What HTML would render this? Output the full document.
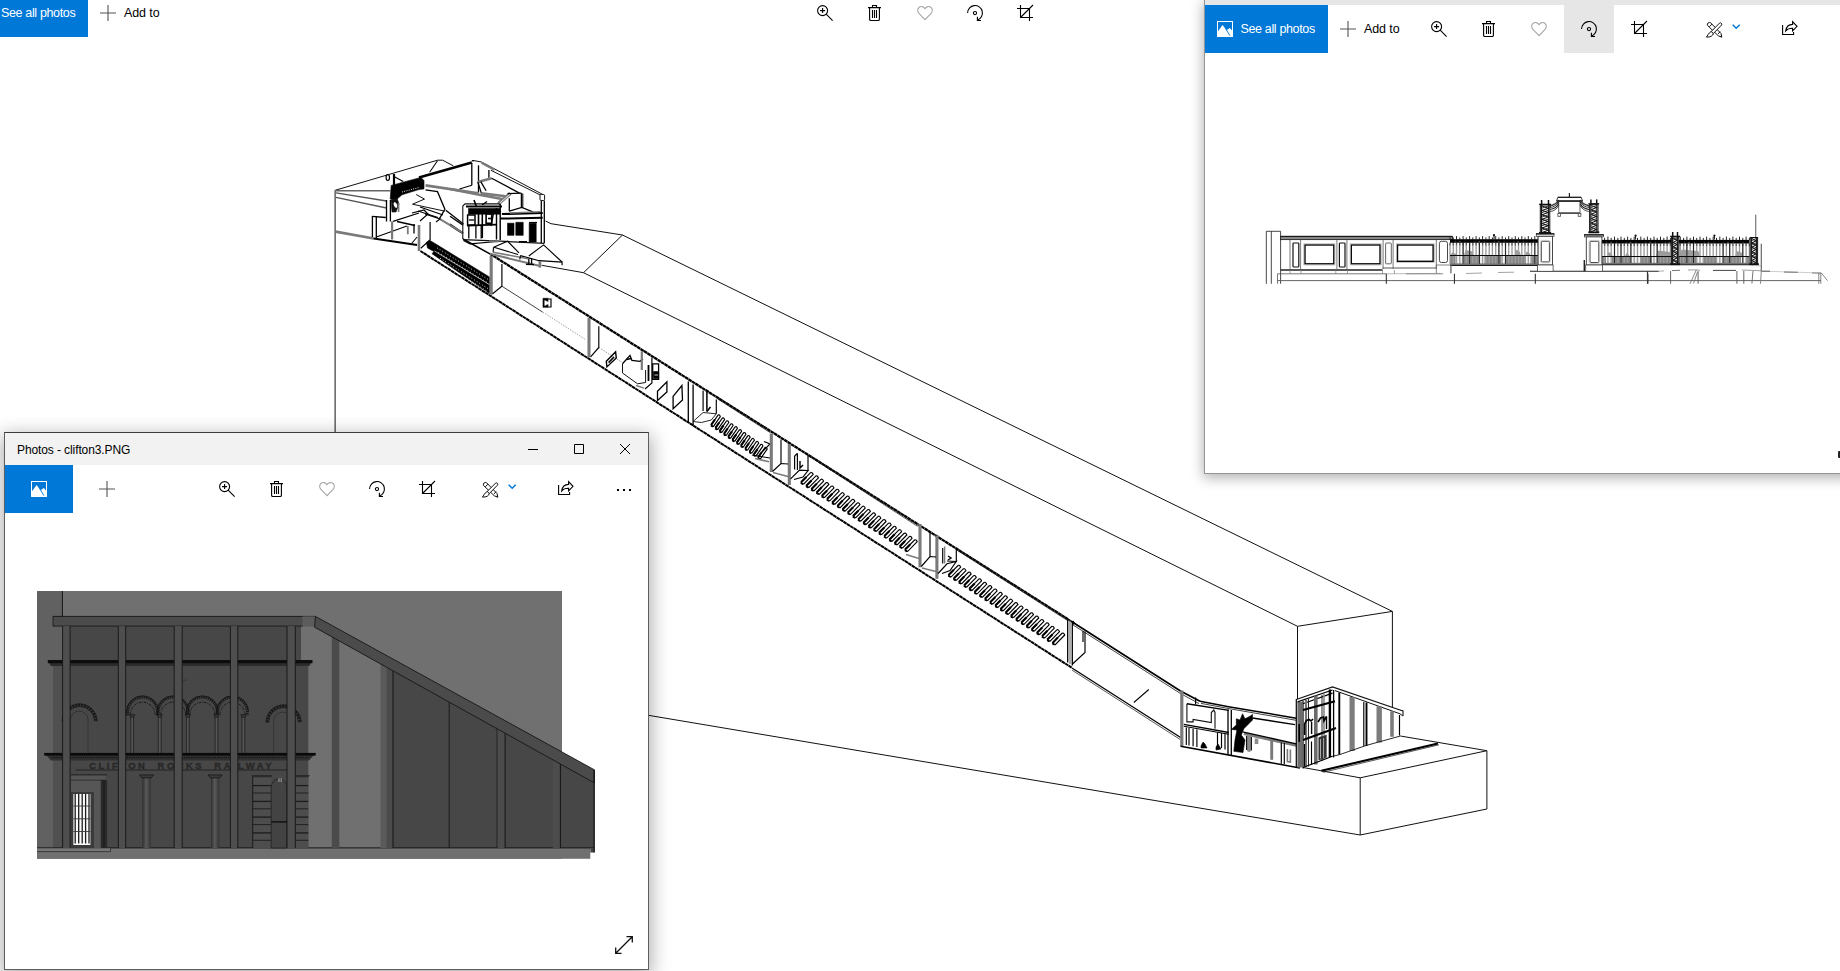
<!DOCTYPE html>
<html lang="en"><head><meta charset="utf-8"><title>Photos</title>
<style>
html,body{margin:0;padding:0;background:#fff;}
body{width:1840px;height:971px;overflow:hidden;position:relative;font-family:"Liberation Sans",sans-serif;color:#000;}
.ic{position:absolute;overflow:visible;display:block}
.abs{position:absolute}
.btn{position:absolute;background:#0078d7;color:#fff}
.t{position:absolute;white-space:nowrap;font-size:12.5px;line-height:16px;letter-spacing:-0.35px}
.win{position:absolute;background:#fff;overflow:hidden}
#w2{left:1204px;top:0px;width:700px;height:474px;border:1px solid #959595;border-top:none;box-sizing:border-box;
    box-shadow:0 3px 12px 1px rgba(0,0,0,.30);overflow:visible}
#w3{left:4px;top:432px;width:645px;height:538px;border:1px solid #5e5e5e;border-top-color:#3c3c3c;box-sizing:border-box;
    box-shadow:0 5px 18px 2px rgba(0,0,0,.33);overflow:visible}
.draw{position:absolute;left:0;top:0;display:block}
</style></head>
<body>
<div id="w1"><div class="btn" style="left:0;top:0;width:88px;height:37px"></div><div class="t" style="left:1px;top:5px;color:#fff">See all photos</div><svg class="ic" style="left:100px;top:5px" width="16" height="16" viewBox="0 0 16 16" ><path d="M0 8h16M8 0v16" fill="none" stroke="#555" stroke-width="1.1"/></svg><div class="t" style="left:124px;top:5px;letter-spacing:-0.1px">Add to</div><svg class="ic" style="left:817px;top:5px" width="16" height="16" viewBox="0 0 16 16" ><circle cx="5.6" cy="5.6" r="5" fill="none" stroke="#000" stroke-width="1.1"/><path d="M9.2 9.2L15.6 15.6M3.1 5.6h5M5.6 3.1v5" fill="none" stroke="#000" stroke-width="1.1"/></svg><svg class="ic" style="left:867px;top:5px" width="16" height="16" viewBox="0 0 16 16" ><path d="M1 2.6h13M5.5 2.5v-2h4v2M2.6 2.6v11.6q0 1.3 1.3 1.3h7.2q1.3 0 1.3-1.3v-11.6M5.5 5v8M7.5 5v8M9.5 5v8" fill="none" stroke="#000" stroke-width="1.1"/></svg><svg class="ic" style="left:917px;top:5px" width="16" height="16" viewBox="0 0 16 16" ><path d="M8 14.6L1.9 8.4C0.2 6.6 0.3 3.9 1.9 2.5C3.7 0.9 6.5 1.4 8 3.6C9.5 1.4 12.3 0.9 14.1 2.5C15.7 3.9 15.8 6.6 14.1 8.4Z" fill="none" stroke="#a6a6a6" stroke-width="1.1"/></svg><svg class="ic" style="left:967px;top:5px" width="16" height="16" viewBox="0 0 16 16" ><path d="M0.6 8A7.4 7.4 0 1 1 10.6 14.9" fill="none" stroke="#000" stroke-width="1.1"/><path d="M10.4 11.8v3.7h3.6" fill="none" stroke="#000" stroke-width="1.1" stroke-width="1.3"/><circle cx="8" cy="8.1" r="1.6" fill="none" stroke="#000" stroke-width="1.1"/></svg><svg class="ic" style="left:1017px;top:5px" width="16" height="16" viewBox="0 0 16 16" ><path d="M3.5 0v12.5h12.5M0 3.5h12.5v12.5M3.5 12.5L16 0" fill="none" stroke="#000" stroke-width="1.1"/></svg><svg class="draw" width="1840" height="971" viewBox="0 0 1840 971"><path d="M545.5 221.0 L551.0 223.7 L622.5 235.0" fill="none" stroke="#111" stroke-width="1.0" />
<path d="M622.5 235.0 L1392.4 611.4" fill="none" stroke="#111" stroke-width="1.0" />
<path d="M622.5 235.0 L583.5 272.7" fill="none" stroke="#111" stroke-width="1.0" />
<path d="M541.8 265.3 L583.5 272.7 L1297.5 626.3" fill="none" stroke="#111" stroke-width="1.0" />
<path d="M1297.5 626.3 L1392.4 611.4" fill="none" stroke="#111" stroke-width="1.0" />
<path d="M1297.5 626.3 L1297.5 699.0" fill="none" stroke="#111" stroke-width="1.0" />
<path d="M1392.4 611.4 L1392.4 707.0" fill="none" stroke="#111" stroke-width="1.0" />
<path d="M335.1 190.3 L335.1 436.0" fill="none" stroke="#111" stroke-width="1.0" />
<path d="M640.0 713.9 L1150.0 799.7 L1360.2 835.0 L1486.9 809.0 L1486.9 750.7 L1400.4 736.0" fill="none" stroke="#111" stroke-width="1.0" />
<path d="M1360.2 835.0 L1360.2 777.8" fill="none" stroke="#111" stroke-width="1.0" />
<path d="M1303.0 767.5 L1321.3 770.8 L1360.2 777.8 L1486.9 750.7" fill="none" stroke="#111" stroke-width="1.0" />
<path d="M1321.3 770.8 L1437.9 743.4" fill="none" stroke="#000" stroke-width="2.1" />
<path d="M1323.0 772.3 L1439.0 744.8" fill="none" stroke="#111" stroke-width="0.7" />
<path d="M450.0 225.5 L462.0 233.3" fill="none" stroke="#000" stroke-width="1.3" />
<path d="M450.0 216.3 L463.0 225.1" fill="none" stroke="#000" stroke-width="1.3" />
<path d="M450.0 224.1 L462.5 232.5" fill="none" stroke="#000" stroke-width="1.3" />
<path d="M463.0 239.0 L489.9 253.9" fill="none" stroke="#000" stroke-width="1.5" />
<path d="M489.9 253.7 L1068.0 619.2" fill="none" stroke="#000" stroke-width="2.3" stroke-dasharray="3.7 0.35"/>
<path d="M1068.0 619.2 L1180.5 690.9 L1200.0 701.3" fill="none" stroke="#000" stroke-width="1.7" />
<path d="M1073.0 624.9 L1180.5 693.5 L1199.0 703.6" fill="none" stroke="#111" stroke-width="0.8" />
<path d="M420.4 251.0 L1072.0 667.9" fill="none" stroke="#000" stroke-width="2.0" stroke-dasharray="3.7 0.35"/>
<path d="M1072.0 667.9 L1180.6 737.4" fill="none" stroke="#000" stroke-width="1.2" />
<path d="M1072.0 670.1 L1180.0 739.4" fill="none" stroke="#111" stroke-width="0.7" />
<path d="M335.1 190.3 L437.5 160.2 L442.6 160.2 L453.3 165.8" fill="none" stroke="#111" stroke-width="1.0" />
<path d="M437.5 160.7 L429.6 172.2" fill="none" stroke="#000" stroke-width="1.04" />
<path d="M335.0 190.8 L390.2 190.8" fill="none" stroke="#666" stroke-width="1.4" />
<path d="M336.0 192.8 L386.5 201.0" fill="none" stroke="#555" stroke-width="1.3" />
<path d="M336.0 197.3 L386.5 208.0" fill="none" stroke="#555" stroke-width="1.3" />
<path d="M419.0 177.4 L471.8 162.6" fill="none" stroke="#000" stroke-width="2.6" />
<path d="M391.2 185.4 L420.8 177.4 L424.0 180.6 L424.0 188.9 L419.0 189.5 L402.0 194.8 L395.5 200.4 L390.2 199.1 Z" fill="#000" stroke="#000" stroke-width="0.6" />
<path d="M402.0 192.0 L419.0 187.5" fill="none" stroke="#fff" stroke-width="0.9" stroke-dasharray="1 1.3"/>
<path d="M394.0 174.0 L394.0 186.0" fill="none" stroke="#000" stroke-width="2.2" />
<ellipse cx="387.8" cy="177.6" rx="1.7" ry="2.9" fill="#fff" stroke="#000" stroke-width="1.2"/>
<path d="M394.9 176.9 L403.2 181.5" fill="none" stroke="#000" stroke-width="1.1700000000000002" />
<path d="M386.5 200.0 L386.5 221.5" fill="none" stroke="#000" stroke-width="1.3" />
<path d="M390.4 200.0 L390.4 221.5" fill="none" stroke="#000" stroke-width="1.3" />
<path d="M391.0 200.0 L397.0 198.0 L399.0 204.0 L396.0 212.0 L392.0 212.0 Z" fill="#111" stroke="#111" stroke-width="0.6" />
<ellipse cx="395.5" cy="205" rx="1.6" ry="3" fill="#fff" transform="rotate(-25 395.5 205)"/>
<path d="M398.6 203.0 L398.6 212.0" fill="none" stroke="#7a7a7a" stroke-width="1.6" />
<path d="M372.2 216.3 L385.8 217.5" fill="none" stroke="#000" stroke-width="1.3" />
<path d="M372.4 216.0 L372.4 238.0" fill="none" stroke="#000" stroke-width="1.3" />
<path d="M376.3 216.5 L376.3 238.0" fill="none" stroke="#000" stroke-width="1.3" />
<path d="M393.0 221.4 L419.0 213.0" fill="none" stroke="#000" stroke-width="1.1700000000000002" />
<path d="M376.3 237.1 L407.0 226.0" fill="none" stroke="#000" stroke-width="1.04" />
<path d="M392.1 221.4 L392.1 239.5" fill="none" stroke="#7a7a7a" stroke-width="2.2" />
<path d="M407.8 226.0 L407.8 234.3" fill="none" stroke="#7a7a7a" stroke-width="1.8" />
<path d="M414.0 224.0 L414.0 233.5" fill="none" stroke="#000" stroke-width="1.3" />
<path d="M397.0 221.5 L415.0 225.5" fill="none" stroke="#000" stroke-width="1.6" />
<path d="M335.4 231.6 L373.8 238.5" fill="none" stroke="#7a7a7a" stroke-width="2.6" />
<path d="M373.6 238.5 L417.1 244.9" fill="none" stroke="#000" stroke-width="2.0" />
<path d="M419.0 225.0 L419.0 251.0" fill="none" stroke="#7a7a7a" stroke-width="2.6" />
<path d="M430.1 222.0 L430.1 239.8 L420.8 248.2" fill="none" stroke="#000" stroke-width="1.1700000000000002" />
<path d="M417.1 237.0 L411.6 243.5" fill="none" stroke="#000" stroke-width="1.04" />
<path d="M425.5 185.4 L478.3 193.3" fill="none" stroke="#7a7a7a" stroke-width="2.6" />
<path d="M425.5 189.9 L437.5 191.7 L444.9 209.3 L439.4 218.6" fill="none" stroke="#000" stroke-width="1.3" />
<path d="M416.2 194.5 L424.5 199.1 L412.5 204.2 L444.9 211.2" fill="none" stroke="#111" stroke-width="1.0" />
<path d="M420.0 207.0 L443.0 215.0" fill="none" stroke="#000" stroke-width="1.04" />
<path d="M418.0 211.0 L438.0 217.5" fill="none" stroke="#000" stroke-width="1.04" />
<path d="M412.0 213.0 L424.0 210.0 L428.0 214.0 L420.0 221.0" fill="none" stroke="#000" stroke-width="1.1700000000000002" />
<path d="M439.6 218.9 L463.3 233.2" fill="none" stroke="#7a7a7a" stroke-width="2.0" />
<path d="M445.8 210.2 L463.5 224.1" fill="none" stroke="#000" stroke-width="1.3" />
<path d="M425.0 214.0 L440.0 219.0 L436.0 222.0" fill="none" stroke="#000" stroke-width="1.1700000000000002" />
<path d="M471.8 163.0 L471.8 185.2" fill="none" stroke="#000" stroke-width="1.3" />
<path d="M478.5 165.3 L478.5 192.4" fill="none" stroke="#000" stroke-width="1.3" />
<path d="M459.5 189.0 L471.8 185.2" fill="none" stroke="#000" stroke-width="1.1700000000000002" />
<path d="M474.6 160.7 L481.5 162.0 L544.5 195.4" fill="none" stroke="#111" stroke-width="1.0" />
<path d="M471.8 160.7 L474.6 160.7" fill="none" stroke="#000" stroke-width="1.3" />
<path d="M481.5 162.8 L494.5 169.8" fill="none" stroke="#7a7a7a" stroke-width="2.2" />
<path d="M490.8 170.2 L541.8 195.8" fill="none" stroke="#111" stroke-width="1.0" />
<path d="M488.9 170.0 L488.9 177.8" fill="none" stroke="#000" stroke-width="1.3" />
<path d="M477.8 182.0 L491.7 178.3" fill="none" stroke="#7a7a7a" stroke-width="2.6" />
<path d="M491.7 178.3 L519.5 193.1" fill="none" stroke="#000" stroke-width="1.3" />
<path d="M477.8 182.0 L481.5 193.6" fill="none" stroke="#000" stroke-width="1.3" />
<path d="M480.8 181.6 L486.1 190.8" fill="none" stroke="#000" stroke-width="1.3" />
<path d="M481.5 193.4 L505.6 196.2" fill="none" stroke="#7a7a7a" stroke-width="2.6" />
<path d="M450.0 189.0 L480.6 195.0 L501.9 199.0" fill="none" stroke="#7a7a7a" stroke-width="2.4" />
<path d="M498.4 203.6 L510.4 193.4" fill="none" stroke="#7a7a7a" stroke-width="3.4" />
<path d="M499.5 203.2 L510.0 194.2" fill="none" stroke="#fff" stroke-width="0.8" />
<path d="M507.5 193.6 L521.4 193.1" fill="none" stroke="#000" stroke-width="1.3" />
<path d="M521.4 193.1 L521.4 207.5" fill="none" stroke="#000" stroke-width="1.3" />
<path d="M522.8 193.5 L522.8 207.8" fill="none" stroke="#000" stroke-width="1.04" />
<path d="M509.3 198.2 L509.3 211.2" fill="none" stroke="#000" stroke-width="1.3" />
<path d="M509.3 211.2 L521.8 207.5 L533.4 212.1" fill="none" stroke="#000" stroke-width="1.3" />
<path d="M541.3 200.5 L541.3 243.0" fill="none" stroke="#000" stroke-width="1.3" />
<path d="M544.3 200.5 L544.3 243.0" fill="none" stroke="#000" stroke-width="1.3" />
<rect x="540" y="194.5" width="4.6" height="6" rx="1.2" fill="#fff" stroke="#111" stroke-width="1"/>
<path d="M462.8 239.0 L462.8 206.0 L465.0 203.9 L500.0 203.9" fill="none" stroke="#111" stroke-width="1.1" />
<path d="M466.0 206.6 L502.0 206.6" fill="none" stroke="#000" stroke-width="2.0" />
<path d="M468.5 208.5 L500.0 208.5 L500.0 214.2 L468.5 214.2 Z" fill="#000" stroke="#000" stroke-width="0.6" />
<path d="M474.0 200.0 L476.5 207.0" fill="none" stroke="#000" stroke-width="1.6" />
<path d="M482.0 205.0 L487.0 201.5" fill="none" stroke="#000" stroke-width="1.4" />
<path d="M467.6 214.9 L475.0 214.9 L475.0 225.1 L467.6 225.1 Z" fill="none" stroke="#000" stroke-width="1.5" />
<path d="M469.0 220.0 L474.0 220.0" fill="none" stroke="#000" stroke-width="1.3" />
<path d="M478.5 212.0 L478.5 225.0" fill="none" stroke="#000" stroke-width="1.6" />
<path d="M482.3 212.0 L482.3 238.0" fill="none" stroke="#000" stroke-width="1.56" />
<path d="M486.1 214.0 L491.7 214.0 L491.7 223.2 L486.1 223.2 Z" fill="none" stroke="#000" stroke-width="1.6" />
<path d="M488.0 218.5 L491.0 218.5" fill="none" stroke="#000" stroke-width="1.56" />
<path d="M494.0 210.0 L491.0 226.0" fill="none" stroke="#000" stroke-width="1.4" />
<path d="M467.0 225.6 L496.0 224.6" fill="none" stroke="#000" stroke-width="1.6" />
<path d="M468.8 226.0 L468.8 238.5" fill="none" stroke="#000" stroke-width="1.3" />
<path d="M475.9 226.0 L475.9 238.5" fill="none" stroke="#000" stroke-width="1.3" />
<path d="M481.2 226.0 L481.2 238.5" fill="none" stroke="#000" stroke-width="1.3" />
<path d="M496.5 208.0 L496.5 239.5" fill="none" stroke="#000" stroke-width="1.4300000000000002" />
<path d="M500.2 204.0 L500.2 240.0" fill="none" stroke="#000" stroke-width="1.4300000000000002" />
<path d="M501.9 214.0 L542.7 213.0" fill="none" stroke="#000" stroke-width="2.2" />
<path d="M510.0 213.0 L541.0 211.6" fill="none" stroke="#7a7a7a" stroke-width="1.4" />
<path d="M500.5 218.6 L542.7 217.7" fill="none" stroke="#000" stroke-width="2.0" />
<path d="M507.5 223.2 L514.0 223.2 L514.0 235.3 L507.5 235.3 Z" fill="#000" stroke="#000" stroke-width="0.6" />
<path d="M515.8 222.3 L523.2 222.3 L523.2 235.3 L515.8 235.3 Z" fill="#000" stroke="#000" stroke-width="0.6" />
<path d="M529.2 223.2 L536.2 223.2 L536.2 242.0 L529.2 242.0 Z" fill="#000" stroke="#000" stroke-width="0.6" />
<path d="M529.0 222.5 L537.0 222.5" fill="none" stroke="#000" stroke-width="1.1700000000000002" />
<path d="M463.0 239.6 L500.0 241.2 L544.5 243.3" fill="none" stroke="#111" stroke-width="1.3" />
<path d="M463.5 240.5 L470.0 243.8 L497.0 241.5" fill="none" stroke="#000" stroke-width="1.1700000000000002" />
<path d="M489.0 241.2 L498.0 241.6" fill="none" stroke="#7a7a7a" stroke-width="1.8" />
<path d="M519.0 241.8 L527.0 241.6" fill="none" stroke="#000" stroke-width="1.4" />
<path d="M493.6 247.2 L507.5 241.2 L519.0 252.8" fill="none" stroke="#000" stroke-width="1.1700000000000002" />
<path d="M493.6 247.2 L493.1 252.3" fill="none" stroke="#000" stroke-width="1.1700000000000002" />
<path d="M494.0 247.3 L518.0 254.5" fill="none" stroke="#000" stroke-width="1.1700000000000002" />
<path d="M528.8 256.0 L543.6 244.9 L562.1 262.1 L562.1 265.3" fill="none" stroke="#000" stroke-width="1.1700000000000002" />
<path d="M520.4 255.6 L539.0 260.7 L562.1 262.1" fill="none" stroke="#000" stroke-width="1.1700000000000002" />
<path d="M489.9 253.7 L539.0 265.8" fill="none" stroke="#7a7a7a" stroke-width="2.0" />
<path d="M493.0 252.2 L528.0 258.8" fill="none" stroke="#7a7a7a" stroke-width="1.6" />
<path d="M520.5 255.5 L519.8 259.5" fill="none" stroke="#000" stroke-width="1.1700000000000002" />
<path d="M528.8 258.4 L528.8 263.9" fill="none" stroke="#000" stroke-width="1.3" />
<path d="M531.6 258.4 L531.6 263.9" fill="none" stroke="#000" stroke-width="1.3" />
<path d="M526.0 264.2 L534.0 264.6" fill="none" stroke="#000" stroke-width="1.4" />
<path d="M539.9 261.0 L539.9 267.6" fill="none" stroke="#7a7a7a" stroke-width="2.8" />
<path d="M426.4 242.4 L430.0 240.5 L435.0 243.5 L489.4 276.9 L489.4 293.6 L432.0 253.7 L434.0 251.5 L427.5 248.0 Z" fill="#000" stroke="#000" stroke-width="0.6" />
<path d="M434.5 251.0 L489.4 284.6" fill="none" stroke="#ddd" stroke-width="0.8" />
<path d="M437.0 247.8 L488.0 279.3" fill="none" stroke="#fff" stroke-width="0.9" stroke-dasharray="0.9 2.2"/>
<path d="M437.0 251.6 L488.0 283.0" fill="none" stroke="#fff" stroke-width="0.9" stroke-dasharray="0.9 2.2" stroke-dashoffset="1.5"/>
<path d="M440.0 258.2 L488.0 288.6" fill="none" stroke="#fff" stroke-width="0.9" stroke-dasharray="0.9 2.2"/>
<path d="M445.0 264.6 L488.0 291.8" fill="none" stroke="#fff" stroke-width="0.9" stroke-dasharray="0.9 2.2" stroke-dashoffset="1.5"/>
<path d="M491.2 256.0 L491.2 294.8" fill="none" stroke="#7a7a7a" stroke-width="3.1" />
<path d="M501.9 263.9 L501.9 286.2 L492.6 293.8" fill="none" stroke="#000" stroke-width="1.1700000000000002" />
<path d="M501.9 286.2 L542.7 312.1" fill="none" stroke="#111" stroke-width="0.8" />
<path d="M542.7 312.1 L586.0 339.8" fill="none" stroke="#666" stroke-width="0.6" stroke-dasharray="1.5 1.2"/>
<path d="M543.0 298.3 L548.0 298.3 L548.0 307.3 L543.0 307.3 Z" fill="#000" stroke="#000" stroke-width="0.6" />
<path d="M548.0 299.0 L551.0 299.0 L551.0 307.0 L548.0 307.0" fill="none" stroke="#000" stroke-width="1.1700000000000002" />
<path d="M544.8 300.5 L549.8 303.0 L544.8 305.5 Z" fill="#fff" stroke="#fff" stroke-width="0.6" />
<path d="M589.0 318.0 L589.0 357.3" fill="none" stroke="#7a7a7a" stroke-width="3.1" />
<path d="M598.8 326.3 L598.8 347.5 L590.6 356.9" fill="none" stroke="#000" stroke-width="1.1700000000000002" />
<path d="M598.8 347.5 L622.0 362.3" fill="none" stroke="#555" stroke-width="0.6" stroke-dasharray="1.5 1.2"/>
<path d="M606.3 361.3 L615.6 351.9 L616.3 358.1 L606.9 366.9 Z" fill="none" stroke="#000" stroke-width="1.4" />
<path d="M608.6 362.6 L614.0 357.0" fill="none" stroke="#000" stroke-width="1.6" />
<path d="M622.5 363.8 L622.5 373.0 L637.5 383.8 L645.6 382.5 L645.6 370.0" fill="none" stroke="#111" stroke-width="1.0" />
<path d="M622.5 363.8 L630.0 355.4 L631.9 360.3 L640.0 361.3 L643.0 359.0" fill="none" stroke="#000" stroke-width="1.3" />
<path d="M626.5 359.5 L631.0 358.5" fill="none" stroke="#000" stroke-width="1.3" />
<path d="M641.8 351.3 L641.8 370.0" fill="none" stroke="#7a7a7a" stroke-width="2.2" />
<path d="M648.5 365.0 L648.5 381.0" fill="none" stroke="#000" stroke-width="1.8" />
<path d="M651.9 357.5 L651.9 383.0 L645.0 389.0" fill="none" stroke="#000" stroke-width="1.1700000000000002" />
<path d="M652.7 363.8 L658.6 363.8 L658.6 379.4 L652.7 379.4 Z" fill="none" stroke="#000" stroke-width="1.3" />
<path d="M653.5 371.5 L658.6 371.5 L658.6 378.5 L653.5 378.5 Z" fill="#000" stroke="#000" stroke-width="0.6" />
<path d="M654.5 375.0 L658.0 375.0" fill="none" stroke="#fff" stroke-width="0.8" />
<path d="M636.0 385.5 L644.0 388.2" fill="none" stroke="#7a7a7a" stroke-width="1.4" />
<path d="M657.5 391.3 L666.9 381.9 L666.9 391.9 L657.5 400.6 Z" fill="none" stroke="#000" stroke-width="1.3" />
<path d="M673.1 396.3 L681.9 385.6 L682.5 400.0 L673.1 408.8 Z" fill="none" stroke="#000" stroke-width="1.3" />
<path d="M688.3 381.5 L688.3 422.3" fill="none" stroke="#000" stroke-width="1.3" />
<path d="M693.1 384.5 L693.1 425.4" fill="none" stroke="#000" stroke-width="1.3" />
<path d="M703.1 390.5 L703.1 411.0" fill="none" stroke="#000" stroke-width="1.1700000000000002" />
<path d="M706.9 392.0 L706.9 411.5" fill="none" stroke="#000" stroke-width="1.5" />
<path d="M706.9 411.5 L710.5 407.0" fill="none" stroke="#000" stroke-width="1.56" />
<path d="M716.3 399.5 L716.3 413.8" fill="none" stroke="#000" stroke-width="1.1700000000000002" />
<path d="M693.1 421.5 L703.1 412.5 L716.3 413.8 L711.3 420.0 L701.3 422.5 L693.1 421.5" fill="none" stroke="#111" stroke-width="0.9" />
<path d="M717.5 398.8 L770.0 432.5" fill="none" stroke="#111" stroke-width="0.7" />
<path d="M719.0 398.2 L770.0 430.8" fill="none" stroke="#111" stroke-width="0.7" />
<path d="M711.2 424.9 L718.0 415.1 Q719.6 414.2 720.3 416.6 L713.5 426.4 Q711.8 426.7 711.2 424.9Z" fill="none" stroke="#000" stroke-width="1.15"/>
<path d="M711.2 424.9 L714.9 419.5" fill="none" stroke="#000" stroke-width="2.1" />
<path d="M710.9 425.5 L712.9 426.6" fill="none" stroke="#000" stroke-width="1.8" />
<path d="M715.5 427.9 L722.3 418.1 Q723.9 417.2 724.6 419.6 L717.8 429.4 Q716.1 429.7 715.5 427.9Z" fill="none" stroke="#000" stroke-width="1.15"/>
<path d="M715.5 427.9 L719.2 422.5" fill="none" stroke="#000" stroke-width="2.1" />
<path d="M715.2 428.5 L717.2 429.6" fill="none" stroke="#000" stroke-width="1.8" />
<path d="M719.7 430.8 L726.5 421.0 Q728.1 420.1 728.8 422.5 L722.0 432.3 Q720.3 432.6 719.7 430.8Z" fill="none" stroke="#000" stroke-width="1.15"/>
<path d="M719.7 430.8 L723.5 425.4" fill="none" stroke="#000" stroke-width="2.1" />
<path d="M719.4 431.4 L721.4 432.5" fill="none" stroke="#000" stroke-width="1.8" />
<path d="M724.0 433.8 L730.8 424.0 Q732.4 423.1 733.1 425.5 L726.3 435.3 Q724.6 435.6 724.0 433.8Z" fill="none" stroke="#000" stroke-width="1.15"/>
<path d="M724.0 433.8 L727.7 428.4" fill="none" stroke="#000" stroke-width="2.1" />
<path d="M723.7 434.4 L725.7 435.5" fill="none" stroke="#000" stroke-width="1.8" />
<path d="M728.3 436.7 L735.1 426.9 Q736.7 426.0 737.4 428.4 L730.6 438.2 Q728.9 438.5 728.3 436.7Z" fill="none" stroke="#000" stroke-width="1.15"/>
<path d="M728.3 436.7 L732.0 431.3" fill="none" stroke="#000" stroke-width="2.1" />
<path d="M728.0 437.3 L730.0 438.4" fill="none" stroke="#000" stroke-width="1.8" />
<path d="M732.5 439.7 L739.3 429.9 Q740.9 429.0 741.6 431.4 L734.8 441.2 Q733.1 441.5 732.5 439.7Z" fill="none" stroke="#000" stroke-width="1.15"/>
<path d="M732.5 439.7 L736.3 434.3" fill="none" stroke="#000" stroke-width="2.1" />
<path d="M732.2 440.3 L734.2 441.4" fill="none" stroke="#000" stroke-width="1.8" />
<path d="M736.8 442.6 L743.6 432.8 Q745.2 431.9 745.9 434.3 L739.1 444.1 Q737.4 444.4 736.8 442.6Z" fill="none" stroke="#000" stroke-width="1.15"/>
<path d="M736.8 442.6 L740.5 437.2" fill="none" stroke="#000" stroke-width="2.1" />
<path d="M736.5 443.2 L738.5 444.3" fill="none" stroke="#000" stroke-width="1.8" />
<path d="M741.0 445.6 L747.8 435.8 Q749.4 434.9 750.1 437.3 L743.3 447.1 Q741.6 447.4 741.0 445.6Z" fill="none" stroke="#000" stroke-width="1.15"/>
<path d="M741.0 445.6 L744.8 440.2" fill="none" stroke="#000" stroke-width="2.1" />
<path d="M740.7 446.2 L742.7 447.3" fill="none" stroke="#000" stroke-width="1.8" />
<path d="M745.3 448.5 L752.1 438.7 Q753.7 437.8 754.4 440.2 L747.6 450.0 Q745.9 450.3 745.3 448.5Z" fill="none" stroke="#000" stroke-width="1.15"/>
<path d="M745.3 448.5 L749.0 443.1" fill="none" stroke="#000" stroke-width="2.1" />
<path d="M745.0 449.1 L747.0 450.2" fill="none" stroke="#000" stroke-width="1.8" />
<path d="M749.6 451.5 L756.4 441.7 Q758.0 440.8 758.7 443.2 L751.9 453.0 Q750.2 453.3 749.6 451.5Z" fill="none" stroke="#000" stroke-width="1.15"/>
<path d="M749.6 451.5 L753.3 446.1" fill="none" stroke="#000" stroke-width="2.1" />
<path d="M749.3 452.1 L751.3 453.2" fill="none" stroke="#000" stroke-width="1.8" />
<path d="M753.8 454.4 L760.6 444.6 Q762.2 443.7 762.9 446.1 L756.1 455.9 Q754.4 456.2 753.8 454.4Z" fill="none" stroke="#000" stroke-width="1.15"/>
<path d="M753.8 454.4 L757.6 449.1" fill="none" stroke="#000" stroke-width="2.1" />
<path d="M753.5 455.0 L755.5 456.1" fill="none" stroke="#000" stroke-width="1.8" />
<path d="M758.1 457.4 L764.9 447.6 Q766.5 446.7 767.2 449.1 L760.4 458.9 Q758.7 459.2 758.1 457.4Z" fill="none" stroke="#000" stroke-width="1.15"/>
<path d="M758.1 457.4 L761.8 452.0" fill="none" stroke="#000" stroke-width="2.1" />
<path d="M757.8 458.0 L759.8 459.1" fill="none" stroke="#000" stroke-width="1.8" />
<path d="M801.1 482.3 L810.5 472.7 Q812.1 471.8 813.2 474.4 L803.8 484.0 Q801.7 484.1 801.1 482.3Z" fill="none" stroke="#000" stroke-width="1.15"/>
<path d="M801.1 482.3 L806.3 477.0" fill="none" stroke="#000" stroke-width="2.1" />
<path d="M800.8 482.9 L803.2 484.2" fill="none" stroke="#000" stroke-width="1.8" />
<path d="M806.3 485.7 L815.7 476.1 Q817.3 475.2 818.4 477.8 L809.0 487.4 Q806.9 487.5 806.3 485.7Z" fill="none" stroke="#000" stroke-width="1.15"/>
<path d="M806.3 485.7 L811.5 480.4" fill="none" stroke="#000" stroke-width="2.1" />
<path d="M806.0 486.3 L808.4 487.6" fill="none" stroke="#000" stroke-width="1.8" />
<path d="M811.5 489.0 L820.9 479.4 Q822.5 478.5 823.6 481.1 L814.2 490.7 Q812.1 490.8 811.5 489.0Z" fill="none" stroke="#000" stroke-width="1.15"/>
<path d="M811.5 489.0 L816.7 483.8" fill="none" stroke="#000" stroke-width="2.1" />
<path d="M811.2 489.6 L813.6 490.9" fill="none" stroke="#000" stroke-width="1.8" />
<path d="M816.7 492.4 L826.1 482.8 Q827.7 481.9 828.8 484.5 L819.4 494.1 Q817.3 494.2 816.7 492.4Z" fill="none" stroke="#000" stroke-width="1.15"/>
<path d="M816.7 492.4 L821.9 487.1" fill="none" stroke="#000" stroke-width="2.1" />
<path d="M816.4 493.0 L818.8 494.3" fill="none" stroke="#000" stroke-width="1.8" />
<path d="M821.9 495.8 L831.3 486.2 Q832.9 485.3 834.0 487.9 L824.6 497.5 Q822.5 497.6 821.9 495.8Z" fill="none" stroke="#000" stroke-width="1.15"/>
<path d="M821.9 495.8 L827.1 490.5" fill="none" stroke="#000" stroke-width="2.1" />
<path d="M821.6 496.4 L824.0 497.7" fill="none" stroke="#000" stroke-width="1.8" />
<path d="M827.1 499.1 L836.5 489.5 Q838.1 488.6 839.2 491.2 L829.8 500.8 Q827.7 500.9 827.1 499.1Z" fill="none" stroke="#000" stroke-width="1.15"/>
<path d="M827.1 499.1 L832.3 493.8" fill="none" stroke="#000" stroke-width="2.1" />
<path d="M826.8 499.7 L829.2 501.0" fill="none" stroke="#000" stroke-width="1.8" />
<path d="M832.3 502.5 L841.7 492.9 Q843.3 492.0 844.4 494.6 L835.0 504.2 Q832.9 504.3 832.3 502.5Z" fill="none" stroke="#000" stroke-width="1.15"/>
<path d="M832.3 502.5 L837.5 497.2" fill="none" stroke="#000" stroke-width="2.1" />
<path d="M832.0 503.1 L834.4 504.4" fill="none" stroke="#000" stroke-width="1.8" />
<path d="M837.5 505.9 L846.9 496.3 Q848.5 495.4 849.6 498.0 L840.2 507.6 Q838.1 507.7 837.5 505.9Z" fill="none" stroke="#000" stroke-width="1.15"/>
<path d="M837.5 505.9 L842.7 500.6" fill="none" stroke="#000" stroke-width="2.1" />
<path d="M837.2 506.5 L839.6 507.8" fill="none" stroke="#000" stroke-width="1.8" />
<path d="M842.7 509.2 L852.1 499.6 Q853.7 498.7 854.8 501.3 L845.4 510.9 Q843.3 511.0 842.7 509.2Z" fill="none" stroke="#000" stroke-width="1.15"/>
<path d="M842.7 509.2 L847.9 503.9" fill="none" stroke="#000" stroke-width="2.1" />
<path d="M842.4 509.8 L844.8 511.1" fill="none" stroke="#000" stroke-width="1.8" />
<path d="M847.9 512.6 L857.3 503.0 Q858.9 502.1 860.0 504.7 L850.6 514.3 Q848.5 514.4 847.9 512.6Z" fill="none" stroke="#000" stroke-width="1.15"/>
<path d="M847.9 512.6 L853.1 507.3" fill="none" stroke="#000" stroke-width="2.1" />
<path d="M847.6 513.2 L850.0 514.5" fill="none" stroke="#000" stroke-width="1.8" />
<path d="M853.1 516.0 L862.5 506.4 Q864.1 505.5 865.2 508.1 L855.8 517.7 Q853.7 517.8 853.1 516.0Z" fill="none" stroke="#000" stroke-width="1.15"/>
<path d="M853.1 516.0 L858.3 510.7" fill="none" stroke="#000" stroke-width="2.1" />
<path d="M852.8 516.6 L855.2 517.9" fill="none" stroke="#000" stroke-width="1.8" />
<path d="M858.3 519.3 L867.7 509.7 Q869.3 508.8 870.4 511.4 L861.0 521.0 Q858.9 521.1 858.3 519.3Z" fill="none" stroke="#000" stroke-width="1.15"/>
<path d="M858.3 519.3 L863.5 514.0" fill="none" stroke="#000" stroke-width="2.1" />
<path d="M858.0 519.9 L860.4 521.2" fill="none" stroke="#000" stroke-width="1.8" />
<path d="M863.5 522.7 L872.9 513.1 Q874.5 512.2 875.6 514.8 L866.2 524.4 Q864.1 524.5 863.5 522.7Z" fill="none" stroke="#000" stroke-width="1.15"/>
<path d="M863.5 522.7 L868.7 517.4" fill="none" stroke="#000" stroke-width="2.1" />
<path d="M863.2 523.3 L865.6 524.6" fill="none" stroke="#000" stroke-width="1.8" />
<path d="M868.7 526.0 L878.1 516.4 Q879.7 515.5 880.8 518.1 L871.4 527.7 Q869.3 527.8 868.7 526.0Z" fill="none" stroke="#000" stroke-width="1.15"/>
<path d="M868.7 526.0 L873.9 520.8" fill="none" stroke="#000" stroke-width="2.1" />
<path d="M868.4 526.6 L870.8 527.9" fill="none" stroke="#000" stroke-width="1.8" />
<path d="M873.9 529.4 L883.3 519.8 Q884.9 518.9 886.0 521.5 L876.6 531.1 Q874.5 531.2 873.9 529.4Z" fill="none" stroke="#000" stroke-width="1.15"/>
<path d="M873.9 529.4 L879.1 524.1" fill="none" stroke="#000" stroke-width="2.1" />
<path d="M873.6 530.0 L876.0 531.3" fill="none" stroke="#000" stroke-width="1.8" />
<path d="M879.1 532.8 L888.5 523.2 Q890.1 522.3 891.2 524.9 L881.8 534.5 Q879.7 534.6 879.1 532.8Z" fill="none" stroke="#000" stroke-width="1.15"/>
<path d="M879.1 532.8 L884.3 527.5" fill="none" stroke="#000" stroke-width="2.1" />
<path d="M878.8 533.4 L881.2 534.7" fill="none" stroke="#000" stroke-width="1.8" />
<path d="M884.3 536.1 L893.7 526.5 Q895.3 525.6 896.4 528.2 L887.0 537.8 Q884.9 537.9 884.3 536.1Z" fill="none" stroke="#000" stroke-width="1.15"/>
<path d="M884.3 536.1 L889.5 530.9" fill="none" stroke="#000" stroke-width="2.1" />
<path d="M884.0 536.7 L886.4 538.0" fill="none" stroke="#000" stroke-width="1.8" />
<path d="M889.5 539.5 L898.9 529.9 Q900.5 529.0 901.6 531.6 L892.2 541.2 Q890.1 541.3 889.5 539.5Z" fill="none" stroke="#000" stroke-width="1.15"/>
<path d="M889.5 539.5 L894.7 534.2" fill="none" stroke="#000" stroke-width="2.1" />
<path d="M889.2 540.1 L891.6 541.4" fill="none" stroke="#000" stroke-width="1.8" />
<path d="M894.7 542.9 L904.1 533.3 Q905.7 532.4 906.8 535.0 L897.4 544.6 Q895.3 544.7 894.7 542.9Z" fill="none" stroke="#000" stroke-width="1.15"/>
<path d="M894.7 542.9 L899.9 537.6" fill="none" stroke="#000" stroke-width="2.1" />
<path d="M894.4 543.5 L896.8 544.8" fill="none" stroke="#000" stroke-width="1.8" />
<path d="M899.9 546.2 L909.3 536.6 Q910.9 535.7 912.0 538.3 L902.6 547.9 Q900.5 548.0 899.9 546.2Z" fill="none" stroke="#000" stroke-width="1.15"/>
<path d="M899.9 546.2 L905.1 541.0" fill="none" stroke="#000" stroke-width="2.1" />
<path d="M899.6 546.8 L902.0 548.1" fill="none" stroke="#000" stroke-width="1.8" />
<path d="M905.1 549.6 L914.5 540.0 Q916.1 539.1 917.2 541.7 L907.8 551.3 Q905.7 551.4 905.1 549.6Z" fill="none" stroke="#000" stroke-width="1.15"/>
<path d="M905.1 549.6 L910.3 544.3" fill="none" stroke="#000" stroke-width="2.1" />
<path d="M904.8 550.2 L907.2 551.5" fill="none" stroke="#000" stroke-width="1.8" />
<path d="M948.6 575.1 L958.0 565.5 Q959.6 564.6 960.7 567.2 L951.3 576.8 Q949.2 576.9 948.6 575.1Z" fill="none" stroke="#000" stroke-width="1.15"/>
<path d="M948.6 575.1 L953.8 569.8" fill="none" stroke="#000" stroke-width="2.1" />
<path d="M948.3 575.7 L950.7 577.0" fill="none" stroke="#000" stroke-width="1.8" />
<path d="M953.8 578.5 L963.2 568.9 Q964.8 568.0 965.9 570.6 L956.5 580.2 Q954.4 580.3 953.8 578.5Z" fill="none" stroke="#000" stroke-width="1.15"/>
<path d="M953.8 578.5 L959.0 573.2" fill="none" stroke="#000" stroke-width="2.1" />
<path d="M953.5 579.1 L955.9 580.4" fill="none" stroke="#000" stroke-width="1.8" />
<path d="M959.0 581.9 L968.4 572.3 Q970.0 571.4 971.1 574.0 L961.7 583.6 Q959.6 583.7 959.0 581.9Z" fill="none" stroke="#000" stroke-width="1.15"/>
<path d="M959.0 581.9 L964.2 576.6" fill="none" stroke="#000" stroke-width="2.1" />
<path d="M958.7 582.5 L961.1 583.8" fill="none" stroke="#000" stroke-width="1.8" />
<path d="M964.2 585.3 L973.6 575.7 Q975.2 574.8 976.3 577.4 L966.9 587.0 Q964.8 587.1 964.2 585.3Z" fill="none" stroke="#000" stroke-width="1.15"/>
<path d="M964.2 585.3 L969.4 580.0" fill="none" stroke="#000" stroke-width="2.1" />
<path d="M963.9 585.9 L966.3 587.2" fill="none" stroke="#000" stroke-width="1.8" />
<path d="M969.4 588.7 L978.8 579.1 Q980.4 578.2 981.5 580.8 L972.1 590.4 Q970.0 590.5 969.4 588.7Z" fill="none" stroke="#000" stroke-width="1.15"/>
<path d="M969.4 588.7 L974.6 583.4" fill="none" stroke="#000" stroke-width="2.1" />
<path d="M969.1 589.3 L971.5 590.6" fill="none" stroke="#000" stroke-width="1.8" />
<path d="M974.6 592.1 L984.0 582.5 Q985.6 581.6 986.7 584.2 L977.3 593.8 Q975.2 593.9 974.6 592.1Z" fill="none" stroke="#000" stroke-width="1.15"/>
<path d="M974.6 592.1 L979.8 586.8" fill="none" stroke="#000" stroke-width="2.1" />
<path d="M974.3 592.7 L976.7 594.0" fill="none" stroke="#000" stroke-width="1.8" />
<path d="M979.8 595.4 L989.2 585.8 Q990.8 584.9 991.9 587.5 L982.5 597.1 Q980.4 597.2 979.8 595.4Z" fill="none" stroke="#000" stroke-width="1.15"/>
<path d="M979.8 595.4 L985.0 590.2" fill="none" stroke="#000" stroke-width="2.1" />
<path d="M979.5 596.0 L981.9 597.3" fill="none" stroke="#000" stroke-width="1.8" />
<path d="M985.0 598.8 L994.4 589.2 Q996.0 588.3 997.1 590.9 L987.7 600.5 Q985.6 600.6 985.0 598.8Z" fill="none" stroke="#000" stroke-width="1.15"/>
<path d="M985.0 598.8 L990.2 593.6" fill="none" stroke="#000" stroke-width="2.1" />
<path d="M984.7 599.4 L987.1 600.7" fill="none" stroke="#000" stroke-width="1.8" />
<path d="M990.2 602.2 L999.6 592.6 Q1001.2 591.7 1002.3 594.3 L992.9 603.9 Q990.8 604.0 990.2 602.2Z" fill="none" stroke="#000" stroke-width="1.15"/>
<path d="M990.2 602.2 L995.4 596.9" fill="none" stroke="#000" stroke-width="2.1" />
<path d="M989.9 602.8 L992.3 604.1" fill="none" stroke="#000" stroke-width="1.8" />
<path d="M995.4 605.6 L1004.8 596.0 Q1006.4 595.1 1007.5 597.7 L998.1 607.3 Q996.0 607.4 995.4 605.6Z" fill="none" stroke="#000" stroke-width="1.15"/>
<path d="M995.4 605.6 L1000.6 600.3" fill="none" stroke="#000" stroke-width="2.1" />
<path d="M995.1 606.2 L997.5 607.5" fill="none" stroke="#000" stroke-width="1.8" />
<path d="M1000.6 609.0 L1010.0 599.4 Q1011.6 598.5 1012.7 601.1 L1003.3 610.7 Q1001.2 610.8 1000.6 609.0Z" fill="none" stroke="#000" stroke-width="1.15"/>
<path d="M1000.6 609.0 L1005.8 603.7" fill="none" stroke="#000" stroke-width="2.1" />
<path d="M1000.3 609.6 L1002.7 610.9" fill="none" stroke="#000" stroke-width="1.8" />
<path d="M1005.8 612.4 L1015.2 602.8 Q1016.8 601.9 1017.9 604.5 L1008.5 614.1 Q1006.4 614.2 1005.8 612.4Z" fill="none" stroke="#000" stroke-width="1.15"/>
<path d="M1005.8 612.4 L1011.0 607.1" fill="none" stroke="#000" stroke-width="2.1" />
<path d="M1005.5 613.0 L1007.9 614.3" fill="none" stroke="#000" stroke-width="1.8" />
<path d="M1011.0 615.8 L1020.4 606.2 Q1022.0 605.3 1023.1 607.9 L1013.7 617.5 Q1011.6 617.6 1011.0 615.8Z" fill="none" stroke="#000" stroke-width="1.15"/>
<path d="M1011.0 615.8 L1016.2 610.5" fill="none" stroke="#000" stroke-width="2.1" />
<path d="M1010.7 616.4 L1013.1 617.7" fill="none" stroke="#000" stroke-width="1.8" />
<path d="M1016.2 619.2 L1025.6 609.6 Q1027.2 608.7 1028.3 611.3 L1018.9 620.9 Q1016.8 621.0 1016.2 619.2Z" fill="none" stroke="#000" stroke-width="1.15"/>
<path d="M1016.2 619.2 L1021.4 613.9" fill="none" stroke="#000" stroke-width="2.1" />
<path d="M1015.9 619.8 L1018.3 621.1" fill="none" stroke="#000" stroke-width="1.8" />
<path d="M1021.4 622.6 L1030.8 613.0 Q1032.4 612.1 1033.5 614.7 L1024.1 624.3 Q1022.0 624.4 1021.4 622.6Z" fill="none" stroke="#000" stroke-width="1.15"/>
<path d="M1021.4 622.6 L1026.6 617.3" fill="none" stroke="#000" stroke-width="2.1" />
<path d="M1021.1 623.2 L1023.5 624.5" fill="none" stroke="#000" stroke-width="1.8" />
<path d="M1026.6 625.9 L1036.0 616.3 Q1037.6 615.4 1038.7 618.0 L1029.3 627.6 Q1027.2 627.7 1026.6 625.9Z" fill="none" stroke="#000" stroke-width="1.15"/>
<path d="M1026.6 625.9 L1031.8 620.7" fill="none" stroke="#000" stroke-width="2.1" />
<path d="M1026.3 626.5 L1028.7 627.9" fill="none" stroke="#000" stroke-width="1.8" />
<path d="M1031.8 629.3 L1041.2 619.7 Q1042.8 618.8 1043.9 621.4 L1034.5 631.0 Q1032.4 631.1 1031.8 629.3Z" fill="none" stroke="#000" stroke-width="1.15"/>
<path d="M1031.8 629.3 L1037.0 624.1" fill="none" stroke="#000" stroke-width="2.1" />
<path d="M1031.5 629.9 L1033.9 631.2" fill="none" stroke="#000" stroke-width="1.8" />
<path d="M1037.0 632.7 L1046.4 623.1 Q1048.0 622.2 1049.1 624.8 L1039.7 634.4 Q1037.6 634.5 1037.0 632.7Z" fill="none" stroke="#000" stroke-width="1.15"/>
<path d="M1037.0 632.7 L1042.2 627.5" fill="none" stroke="#000" stroke-width="2.1" />
<path d="M1036.7 633.3 L1039.1 634.6" fill="none" stroke="#000" stroke-width="1.8" />
<path d="M1042.2 636.1 L1051.6 626.5 Q1053.2 625.6 1054.3 628.2 L1044.9 637.8 Q1042.8 637.9 1042.2 636.1Z" fill="none" stroke="#000" stroke-width="1.15"/>
<path d="M1042.2 636.1 L1047.4 630.8" fill="none" stroke="#000" stroke-width="2.1" />
<path d="M1041.9 636.7 L1044.3 638.0" fill="none" stroke="#000" stroke-width="1.8" />
<path d="M1047.4 639.5 L1056.8 629.9 Q1058.4 629.0 1059.5 631.6 L1050.1 641.2 Q1048.0 641.3 1047.4 639.5Z" fill="none" stroke="#000" stroke-width="1.15"/>
<path d="M1047.4 639.5 L1052.6 634.2" fill="none" stroke="#000" stroke-width="2.1" />
<path d="M1047.1 640.1 L1049.5 641.4" fill="none" stroke="#000" stroke-width="1.8" />
<path d="M1052.6 642.9 L1062.0 633.3 Q1063.6 632.4 1064.7 635.0 L1055.3 644.6 Q1053.2 644.7 1052.6 642.9Z" fill="none" stroke="#000" stroke-width="1.15"/>
<path d="M1052.6 642.9 L1057.8 637.6" fill="none" stroke="#000" stroke-width="2.1" />
<path d="M1052.3 643.5 L1054.7 644.8" fill="none" stroke="#000" stroke-width="1.8" />
<path d="M764.0 441.5 L770.0 444.0 L762.0 452.0" fill="none" stroke="#000" stroke-width="1.1700000000000002" />
<path d="M755.0 458.5 L769.0 461.8" fill="none" stroke="#7a7a7a" stroke-width="1.6" />
<path d="M752.0 455.0 L770.0 458.0" fill="none" stroke="#000" stroke-width="1.04" />
<path d="M771.3 433.5 L771.3 472.0" fill="none" stroke="#7a7a7a" stroke-width="3.1" />
<path d="M781.0 439.5 L781.0 463.5" fill="none" stroke="#000" stroke-width="1.1700000000000002" />
<path d="M789.3 444.0 L789.3 485.0" fill="none" stroke="#7a7a7a" stroke-width="3.1" />
<path d="M794.6 456.0 L794.6 469.5" fill="none" stroke="#000" stroke-width="1.1700000000000002" />
<path d="M797.4 453.5 L797.4 470.0" fill="none" stroke="#000" stroke-width="1.1700000000000002" />
<path d="M794.6 456.0 L797.4 453.5" fill="none" stroke="#000" stroke-width="1.1700000000000002" />
<path d="M800.0 461.0 L800.0 468.0 L803.0 465.0" fill="none" stroke="#000" stroke-width="1.4300000000000002" />
<path d="M808.0 455.0 L808.0 470.5 L799.0 470.0" fill="none" stroke="#000" stroke-width="1.1700000000000002" />
<path d="M772.5 471.5 L781.0 463.5 L788.0 464.0" fill="none" stroke="#000" stroke-width="1.1700000000000002" />
<path d="M773.0 472.5 L788.0 476.5" fill="none" stroke="#7a7a7a" stroke-width="1.3" />
<path d="M790.6 478.8 L799.0 470.5 L808.0 470.5 L803.0 477.0 L794.0 479.5" fill="none" stroke="#000" stroke-width="1.1700000000000002" />
<path d="M807.5 455.0 L917.5 526.3" fill="none" stroke="#111" stroke-width="0.7" />
<path d="M809.0 454.6 L917.5 524.7" fill="none" stroke="#111" stroke-width="0.7" />
<path d="M920.0 524.0 L920.0 567.3" fill="none" stroke="#7a7a7a" stroke-width="3.1" />
<path d="M930.0 531.0 L930.0 556.5" fill="none" stroke="#000" stroke-width="1.1700000000000002" />
<path d="M936.9 535.5 L936.9 578.8" fill="none" stroke="#7a7a7a" stroke-width="3.1" />
<path d="M942.7 548.0 L942.7 563.5" fill="none" stroke="#000" stroke-width="1.1700000000000002" />
<path d="M944.6 546.5 L944.6 563.5" fill="none" stroke="#7a7a7a" stroke-width="1.4" />
<path d="M948.0 556.0 L951.0 558.0 L948.0 560.0" fill="none" stroke="#000" stroke-width="1.4300000000000002" />
<path d="M956.3 548.8 L956.3 561.5 L947.0 561.0" fill="none" stroke="#000" stroke-width="1.1700000000000002" />
<path d="M921.3 566.5 L930.0 556.5 L936.0 557.0" fill="none" stroke="#000" stroke-width="1.1700000000000002" />
<path d="M922.0 568.0 L936.0 571.5" fill="none" stroke="#7a7a7a" stroke-width="1.3" />
<path d="M906.0 554.5 L919.0 558.5" fill="none" stroke="#7a7a7a" stroke-width="1.4" />
<path d="M938.1 573.5 L947.0 563.8 L956.3 561.5 L950.0 570.5 L942.0 573.5" fill="none" stroke="#000" stroke-width="1.1700000000000002" />
<path d="M956.0 549.5 L1067.5 620.5" fill="none" stroke="#111" stroke-width="0.7" />
<path d="M958.0 549.2 L1067.5 619.0" fill="none" stroke="#111" stroke-width="0.7" />
<path d="M1067.7 619.5 L1067.7 662.5" fill="none" stroke="#000" stroke-width="1.3" />
<path d="M1072.3 622.3 L1072.3 665.5" fill="none" stroke="#000" stroke-width="1.3" />
<path d="M1070.0 620.5 L1070.0 664.0" fill="none" stroke="#7a7a7a" stroke-width="1.2" />
<path d="M1072.5 621.0 L1074.0 623.0 L1072.5 624.5" fill="none" stroke="#000" stroke-width="1.56" />
<path d="M1085.0 631.5 L1085.0 652.5 L1072.5 664.0" fill="none" stroke="#000" stroke-width="1.1700000000000002" />
<path d="M1083.0 631.0 L1083.0 642.0" fill="none" stroke="#000" stroke-width="1.1700000000000002" />
<path d="M1133.8 702.5 L1148.8 689.5" fill="none" stroke="#000" stroke-width="1.04" />
<path d="M1181.8 690.6 L1181.8 746.3" fill="none" stroke="#7a7a7a" stroke-width="3.2" />
<path d="M1180.6 746.3 L1300.0 768.0" fill="none" stroke="#000" stroke-width="1.6" />
<path d="M1195.6 697.5 L1195.6 704.4" fill="none" stroke="#000" stroke-width="1.1700000000000002" />
<path d="M1200.0 701.3 L1230.0 706.9 L1296.3 718.2" fill="none" stroke="#000" stroke-width="1.5" />
<path d="M1201.0 703.4 L1230.0 708.8 L1296.3 720.3" fill="none" stroke="#111" stroke-width="0.8" />
<path d="M1186.9 703.8 L1186.9 721.9 L1193.1 721.9 L1193.1 719.4 L1211.3 722.5 L1211.3 712.5 L1213.8 710.0 L1215.0 712.5 L1215.0 728.8" fill="none" stroke="#111" stroke-width="1.1" />
<path d="M1186.9 703.8 L1229.0 710.4" fill="none" stroke="#000" stroke-width="1.4300000000000002" />
<path d="M1183.8 724.4 L1228.8 732.5" fill="none" stroke="#000" stroke-width="1.4300000000000002" />
<path d="M1183.8 726.2 L1228.8 734.3" fill="none" stroke="#000" stroke-width="1.04" />
<path d="M1186.3 727.6 L1186.3 745.1" fill="none" stroke="#000" stroke-width="1.1700000000000002" />
<path d="M1189.0 728.0 L1189.0 745.5" fill="none" stroke="#000" stroke-width="1.1700000000000002" />
<path d="M1193.1 728.8 L1193.1 746.3" fill="none" stroke="#000" stroke-width="1.1700000000000002" />
<path d="M1196.9 729.5 L1196.9 747.0" fill="none" stroke="#000" stroke-width="1.1700000000000002" />
<path d="M1217.5 732.5 L1217.5 747.5" fill="none" stroke="#000" stroke-width="1.1700000000000002" />
<path d="M1221.5 733.0 L1221.5 748.0" fill="none" stroke="#000" stroke-width="1.1700000000000002" />
<path d="M1225.0 734.0 L1225.0 749.5" fill="none" stroke="#000" stroke-width="1.1700000000000002" />
<path d="M1201.0 746.0 L1203.0 742.0 L1205.0 744.0 L1207.0 748.0 L1201.0 748.0 Z" fill="#000" stroke="#000" stroke-width="0.6" />
<path d="M1216.0 747.0 L1218.0 744.0 L1221.0 749.0 L1216.0 750.0 Z" fill="#000" stroke="#000" stroke-width="0.6" />
<path d="M1228.0 709.5 L1228.0 754.5" fill="none" stroke="#000" stroke-width="1.3" />
<path d="M1231.3 710.0 L1231.3 755.3" fill="none" stroke="#000" stroke-width="1.3" />
<path d="M1236.3 718.8 L1240.0 720.0 L1242.5 713.8 L1245.0 718.8 L1250.0 716.3 L1252.5 714.4 L1252.5 720.0 L1243.8 728.8 L1241.3 735.0 L1245.0 740.0 L1243.0 752.5 L1233.8 751.3 L1235.0 740.0 L1236.9 730.0 L1231.3 729.4 L1236.3 725.0 Z" fill="#000" stroke="#000" stroke-width="0.6" />
<path d="M1252.5 718.0 L1295.0 724.6" fill="none" stroke="#000" stroke-width="1.3" />
<path d="M1244.0 733.6 L1296.3 745.4" fill="none" stroke="#7a7a7a" stroke-width="3.0" />
<path d="M1242.5 731.9 L1296.3 743.8" fill="none" stroke="#000" stroke-width="1.3" />
<path d="M1249.0 736.5 L1249.0 750.0" fill="none" stroke="#8a8a8a" stroke-width="4.0" stroke-linecap="round"/>
<path d="M1246.6 736.0 L1246.6 750.0" fill="none" stroke="#000" stroke-width="1.04" />
<path d="M1251.4 737.0 L1251.4 750.5" fill="none" stroke="#000" stroke-width="1.04" />
<path d="M1256.5 738.5 L1256.5 744.0" fill="none" stroke="#8c8c8c" stroke-width="3.6" />
<path d="M1271.7 741.0 L1271.7 759.8" fill="none" stroke="#7a7a7a" stroke-width="2.9" />
<path d="M1281.3 742.5 L1281.3 763.8" fill="none" stroke="#000" stroke-width="1.1700000000000002" />
<path d="M1284.3 743.0 L1284.3 764.3" fill="none" stroke="#000" stroke-width="1.1700000000000002" />
<path d="M1287.4 749.0 L1287.4 761.5 L1290.4 762.0 L1290.4 749.5" fill="none" stroke="#7a7a7a" stroke-width="1.6" />
<path d="M1296.3 699.0 L1296.3 767.5" fill="none" stroke="#000" stroke-width="1.2" />
<path d="M1303.0 701.0 L1303.0 768.5" fill="none" stroke="#000" stroke-width="1.2" />
<path d="M1299.7 702.0 L1299.7 767.5" fill="none" stroke="#6c6c6c" stroke-width="4.6" />
<path d="M1299.2 724.0 L1299.2 742.0" fill="none" stroke="#000" stroke-width="1.6" />
<path d="M1296.3 699.4 L1332.5 686.9 L1400.0 710.0 L1403.0 711.0 L1403.0 716.0" fill="none" stroke="#111" stroke-width="1.1" />
<path d="M1297.5 701.9 L1332.5 690.0" fill="none" stroke="#000" stroke-width="1.1700000000000002" />
<path d="M1303.0 703.8 L1332.5 693.1" fill="none" stroke="#000" stroke-width="1.1700000000000002" />
<path d="M1335.0 690.6 L1400.0 713.8 L1403.0 716.0" fill="none" stroke="#111" stroke-width="1.0" />
<path d="M1315.8 695.5 L1315.8 764.5" fill="none" stroke="#6c6c6c" stroke-width="3.6" />
<path d="M1306.0 700.0 L1306.0 766.5" fill="none" stroke="#777" stroke-width="2.2" />
<path d="M1324.0 694.0 L1324.0 735.0" fill="none" stroke="#888" stroke-width="1.6" />
<path d="M1329.9 689.5 L1329.9 757.0" fill="none" stroke="#000" stroke-width="2.4" />
<path d="M1333.6 690.0 L1333.6 757.5" fill="none" stroke="#000" stroke-width="1.3" />
<path d="M1308.5 699.0 L1308.5 766.5" fill="none" stroke="#111" stroke-width="0.9" />
<path d="M1322.0 695.0 L1322.0 761.0" fill="none" stroke="#111" stroke-width="0.9" />
<path d="M1303.0 710.0 L1335.0 701.3" fill="none" stroke="#000" stroke-width="2.2" />
<path d="M1303.0 740.0 L1336.0 728.0" fill="none" stroke="#000" stroke-width="2.2" />
<path d="M1304.6 735.0 L1304.6 724.0 L1306.5 720.5 L1309.0 719.5 L1311.0 721.0 L1313.0 719.0" fill="none" stroke="#000" stroke-width="1.6" />
<path d="M1311.6 734.0 L1311.6 722.0" fill="none" stroke="#000" stroke-width="1.4" />
<path d="M1318.0 722.0 L1320.5 718.0 L1323.5 717.0 L1324.0 721.0 L1326.5 716.5" fill="none" stroke="#000" stroke-width="1.6" />
<path d="M1326.5 716.5 L1326.5 729.0" fill="none" stroke="#000" stroke-width="1.4" />
<path d="M1318.8 737.5 L1326.3 735.0 L1326.3 757.5 L1318.8 760.0 Z" fill="#333" stroke="#333" stroke-width="0.6" />
<path d="M1320.5 739.0 L1320.5 758.5" fill="none" stroke="#ccc" stroke-width="0.8" />
<path d="M1323.6 738.0 L1323.6 757.8" fill="none" stroke="#ccc" stroke-width="0.8" />
<path d="M1304.5 744.0 L1304.5 766.5" fill="none" stroke="#000" stroke-width="1.1700000000000002" />
<path d="M1311.5 741.5 L1311.5 764.5" fill="none" stroke="#000" stroke-width="1.1700000000000002" />
<path d="M1339.3 692.5 L1339.3 754.5" fill="none" stroke="#000" stroke-width="1.9" />
<path d="M1352.1 697.0 L1352.1 751.0" fill="none" stroke="#7c7c7c" stroke-width="5.2" />
<path d="M1363.8 702.0 L1363.8 746.3" fill="none" stroke="#000" stroke-width="1.1700000000000002" />
<path d="M1366.5 702.5 L1366.5 746.0" fill="none" stroke="#000" stroke-width="1.9" />
<path d="M1379.2 706.3 L1379.2 742.5" fill="none" stroke="#7c7c7c" stroke-width="5.4" />
<path d="M1392.0 711.3 L1392.0 736.8" fill="none" stroke="#7c7c7c" stroke-width="3.6" />
<path d="M1399.5 715.0 L1399.5 735.5" fill="none" stroke="#000" stroke-width="1.1700000000000002" />
<path d="M1332.5 756.3 L1340.0 754.5 L1366.0 745.5 L1400.4 736.0" fill="none" stroke="#111" stroke-width="0.9" />
<path d="M1303.0 767.5 L1332.5 756.3" fill="none" stroke="#000" stroke-width="1.1700000000000002" /></svg></div>
<div class="win" id="w2"><div class="abs" style="left:0;top:0;width:700px;height:5px;background:#e6e6e6"></div><div class="btn" style="left:0;top:5px;width:123px;height:48px"></div><svg class="ic" style="left:12px;top:21px" width="16" height="16" viewBox="0 0 16 16" ><rect x="0.5" y="0.5" width="15" height="15" fill="none" stroke="#fff" stroke-width="1"/><path d="M1 10.2L5.6 3.9 9.4 9.3 12.9 6.9 15 9.6V15H1Z" fill="#fff"/><path d="M9 8.2L12.9 14.6" stroke="#0078d7" stroke-width="0.9" fill="none"/></svg><div class="t" style="left:35.5px;top:21px;color:#fff">See all photos</div><svg class="ic" style="left:135px;top:21px" width="16" height="16" viewBox="0 0 16 16" ><path d="M0 8h16M8 0v16" fill="none" stroke="#555" stroke-width="1.1"/></svg><div class="t" style="left:159px;top:21px;letter-spacing:-0.1px">Add to</div><div class="abs" style="left:359px;top:5px;width:50px;height:48px;background:#e6e6e6"></div><svg class="ic" style="left:226px;top:21px" width="16" height="16" viewBox="0 0 16 16" ><circle cx="5.6" cy="5.6" r="5" fill="none" stroke="#000" stroke-width="1.1"/><path d="M9.2 9.2L15.6 15.6M3.1 5.6h5M5.6 3.1v5" fill="none" stroke="#000" stroke-width="1.1"/></svg><svg class="ic" style="left:276px;top:21px" width="16" height="16" viewBox="0 0 16 16" ><path d="M1 2.6h13M5.5 2.5v-2h4v2M2.6 2.6v11.6q0 1.3 1.3 1.3h7.2q1.3 0 1.3-1.3v-11.6M5.5 5v8M7.5 5v8M9.5 5v8" fill="none" stroke="#000" stroke-width="1.1"/></svg><svg class="ic" style="left:326px;top:21px" width="16" height="16" viewBox="0 0 16 16" ><path d="M8 14.6L1.9 8.4C0.2 6.6 0.3 3.9 1.9 2.5C3.7 0.9 6.5 1.4 8 3.6C9.5 1.4 12.3 0.9 14.1 2.5C15.7 3.9 15.8 6.6 14.1 8.4Z" fill="none" stroke="#a6a6a6" stroke-width="1.1"/></svg><svg class="ic" style="left:376px;top:21px" width="16" height="16" viewBox="0 0 16 16" ><path d="M0.6 8A7.4 7.4 0 1 1 10.6 14.9" fill="none" stroke="#000" stroke-width="1.1"/><path d="M10.4 11.8v3.7h3.6" fill="none" stroke="#000" stroke-width="1.1" stroke-width="1.3"/><circle cx="8" cy="8.1" r="1.6" fill="none" stroke="#000" stroke-width="1.1"/></svg><svg class="ic" style="left:426px;top:21px" width="16" height="16" viewBox="0 0 16 16" ><path d="M3.5 0v12.5h12.5M0 3.5h12.5v12.5M3.5 12.5L16 0" fill="none" stroke="#000" stroke-width="1.1"/></svg><svg class="ic" style="left:501px;top:21.5px" width="17" height="16" viewBox="0 0 17 16" ><path d="M1.4 3.3A2.2 2.2 0 0 1 4.5 0.7L15.1 11.6 15.8 15.2 12.3 13.8Z" fill="#fff" stroke="#111" stroke-width="1" stroke-linejoin="round"/><path d="M3.3 4.7L5.9 2.3M12 11.8L14.3 9.6" fill="none" stroke="#111" stroke-width="1" stroke-linejoin="round" stroke-width="0.9"/><path d="M14.1 14.5l1.7 0.7-0.4-1.9z" fill="#111"/><path d="M13.6 1.1A1.4 1.4 0 0 1 15.5 3.1L7.3 11.6 5.2 9.5Z" fill="#fff" stroke="#111" stroke-width="1" stroke-linejoin="round"/><path d="M5.2 9.5L7.3 11.6C6.6 14 4.6 15.2 0.4 15.1C1.8 13.9 2 11.3 5.2 9.5Z" fill="#fff" stroke="#111" stroke-width="1" stroke-linejoin="round"/></svg><svg class="ic" style="left:526.8px;top:24px" width="9" height="6" viewBox="0 0 9 6" ><path d="M0.7 0.8L4.2 4.3 7.7 0.8" fill="none" stroke="#0078d7" stroke-width="1.5"/></svg><svg class="ic" style="left:577px;top:21.3px" width="16" height="14" viewBox="0 0 16 14" ><path d="M0.6 4v9.5h11v-2.6" fill="none" stroke="#000" stroke-width="1.1"/><path d="M3.7 9.9C4.3 5.6 7.3 3.5 10.6 3.4V0.7L15 5.3 10.6 9.9V7.3C7.6 7.2 5.3 8 3.7 9.9Z" fill="none" stroke="#000" stroke-width="1.1" stroke-linejoin="miter"/></svg><div class="abs" style="left:633px;top:451px;width:3px;height:7px;background:#222;border-radius:1px"></div><svg class="draw" style="left:-1205px" width="1840" height="480" viewBox="0 0 1840 480"><path d="M1266.3 283.8 L1266.3 231.3 L1280.6 231.3 L1280.6 283.8" fill="none" stroke="#333" stroke-width="0.9" />
<path d="M1271.3 231.3 L1271.3 283.8" fill="none" stroke="#333" stroke-width="0.9" />
<rect x="1280.6" y="236.6" width="171.9" height="3.0" rx="0" fill="#8a8a8a" stroke="#222" stroke-width="0.9"/>
<path d="M1280.6 236.3 L1452.5 236.3" fill="none" stroke="#111" stroke-width="1.0" />
<path d="M1280.6 270.0 L1382.5 270.0" fill="none" stroke="#222" stroke-width="1.6" />
<path d="M1382.5 268.0 L1436.3 268.0" fill="none" stroke="#444" stroke-width="0.9" />
<path d="M1436.3 265.0 L1450.6 265.0 L1450.6 273.5" fill="none" stroke="#666" stroke-width="0.8" />
<path d="M1436.3 265.0 L1436.3 273.5" fill="none" stroke="#666" stroke-width="0.8" />
<path d="M1290.0 239.6 L1290.0 269.0" fill="none" stroke="#555" stroke-width="0.8" />
<path d="M1300.6 239.6 L1300.6 269.0" fill="none" stroke="#555" stroke-width="0.8" />
<path d="M1336.9 239.6 L1336.9 269.0" fill="none" stroke="#555" stroke-width="0.8" />
<path d="M1346.9 239.6 L1346.9 269.0" fill="none" stroke="#555" stroke-width="0.8" />
<path d="M1383.1 239.6 L1383.1 269.0" fill="none" stroke="#555" stroke-width="0.8" />
<path d="M1393.1 239.6 L1393.1 269.0" fill="none" stroke="#555" stroke-width="0.8" />
<path d="M1436.3 239.6 L1436.3 269.0" fill="none" stroke="#555" stroke-width="0.8" />
<rect x="1293.0" y="243.0" width="5.8" height="24.0" rx="0.8" fill="none" stroke="#111" stroke-width="1.2"/>
<rect x="1339.4" y="243.0" width="5.6" height="24.0" rx="0.8" fill="none" stroke="#111" stroke-width="1.2"/>
<rect x="1385.6" y="243.0" width="5.7" height="20.8" rx="0.8" fill="none" stroke="#555" stroke-width="0.9"/>
<rect x="1439.4" y="241.3" width="8.1" height="21.2" rx="2" fill="none" stroke="#333" stroke-width="0.9"/>
<rect x="1305.0" y="245.0" width="28.8" height="18.8" rx="0" fill="none" stroke="#0a0a0a" stroke-width="1.4"/>
<rect x="1303.8" y="243.8" width="31.2" height="21.2" rx="0" fill="none" stroke="#999" stroke-width="0.5"/>
<rect x="1351.3" y="245.0" width="28.7" height="18.8" rx="0" fill="none" stroke="#0a0a0a" stroke-width="1.4"/>
<rect x="1350.1" y="243.8" width="31.1" height="21.2" rx="0" fill="none" stroke="#999" stroke-width="0.5"/>
<rect x="1397.5" y="245.0" width="35.6" height="16.3" rx="0" fill="none" stroke="#0a0a0a" stroke-width="1.4"/>
<rect x="1396.3" y="243.8" width="38.0" height="18.7" rx="0" fill="none" stroke="#999" stroke-width="0.5"/>
<path d="M1277.5 283.8 L1277.5 273.8 L1386.0 273.8" fill="none" stroke="#555" stroke-width="0.8" />
<path d="M1277.5 280.6 L1821.0 280.6" fill="none" stroke="#555" stroke-width="0.9" />
<path d="M1386.0 273.8 L1440.0 273.4" fill="none" stroke="#aaa" stroke-width="0.8" />
<path d="M1406.0 273.8 L1443.0 273.8" fill="none" stroke="#888" stroke-width="1.0" />
<path d="M1290.0 270.0 L1290.0 273.8" fill="none" stroke="#777" stroke-width="0.7" />
<path d="M1301.0 270.0 L1301.0 273.8" fill="none" stroke="#777" stroke-width="0.7" />
<path d="M1335.8 270.0 L1335.8 273.8" fill="none" stroke="#777" stroke-width="0.7" />
<path d="M1347.5 270.0 L1347.5 273.8" fill="none" stroke="#777" stroke-width="0.7" />
<path d="M1382.5 270.0 L1382.5 273.8" fill="none" stroke="#777" stroke-width="0.7" />
<path d="M1394.4 270.0 L1394.4 273.8" fill="none" stroke="#777" stroke-width="0.7" />
<path d="M1386.3 273.8 L1386.3 283.8" fill="none" stroke="#222" stroke-width="1.0" />
<path d="M1454.4 273.8 L1454.4 283.8" fill="none" stroke="#222" stroke-width="1.0" />
<path d="M1535.3 273.8 L1535.3 283.8" fill="none" stroke="#222" stroke-width="1.0" />
<path d="M1647.9 273.8 L1647.9 283.8" fill="none" stroke="#222" stroke-width="1.0" />
<path d="M1466.0 273.5 L1482.0 273.0" fill="none" stroke="#999" stroke-width="0.9" />
<path d="M1498.0 272.5 L1514.0 272.2" fill="none" stroke="#999" stroke-width="0.9" />
<path d="M1530.0 271.3 L1658.8 271.3" fill="none" stroke="#222" stroke-width="1.1" />
<rect x="1450.0" y="255.4" width="88.1" height="9.9" rx="0" fill="#868686" stroke="none" stroke-width="0"/>
<path d="M1464.0 255.7 L1465.5 250.0 L1472.5 251.5 L1474.0 255.7 Z" fill="#9c9c9c"/>
<path d="M1514.5 255.7 L1516.0 249.8 L1519.5 251.3 L1521.0 255.7 Z" fill="#9c9c9c"/>
<path d="M1525.0 255.7 L1526.5 251.5 L1529.5 253.0 L1531.0 255.7 Z" fill="#9c9c9c"/>
<path d="M1450.5 255.7 L1452.0 252.5 L1456.5 254.0 L1458.0 255.7 Z" fill="#9c9c9c"/>
<rect x="1455.5" y="256.0" width="8.5" height="7.6" rx="0" fill="#f2f2f2" stroke="none" stroke-width="0"/>
<rect x="1480.0" y="256.0" width="4.5" height="7.6" rx="0" fill="#f2f2f2" stroke="none" stroke-width="0"/>
<rect x="1501.5" y="256.0" width="3.5" height="7.6" rx="0" fill="#f2f2f2" stroke="none" stroke-width="0"/>
<rect x="1526.0" y="256.0" width="4.5" height="7.6" rx="0" fill="#f2f2f2" stroke="none" stroke-width="0"/>
<path d="M1450.0 242.8 L1450.0 263.7" fill="none" stroke="#9d9d9d" stroke-width="1.35" />
<path d="M1450.0 242.8 L1450.0 245.4" fill="none" stroke="#5a5a5a" stroke-width="1.2" />
<path d="M1450.0 236.1 L1450.0 239.5" fill="none" stroke="#2a2a2a" stroke-width="1.0" />
<path d="M1453.3 242.8 L1453.3 263.7" fill="none" stroke="#9d9d9d" stroke-width="1.35" />
<path d="M1453.3 242.8 L1453.3 245.4" fill="none" stroke="#5a5a5a" stroke-width="1.2" />
<path d="M1453.3 237.4 L1453.3 239.5" fill="none" stroke="#2a2a2a" stroke-width="1.0" />
<path d="M1456.5 242.8 L1456.5 263.7" fill="none" stroke="#9d9d9d" stroke-width="1.35" />
<path d="M1456.5 242.8 L1456.5 245.4" fill="none" stroke="#5a5a5a" stroke-width="1.2" />
<path d="M1456.5 236.1 L1456.5 239.5" fill="none" stroke="#2a2a2a" stroke-width="1.0" />
<path d="M1459.8 242.8 L1459.8 263.7" fill="none" stroke="#9d9d9d" stroke-width="1.35" />
<path d="M1459.8 242.8 L1459.8 245.4" fill="none" stroke="#5a5a5a" stroke-width="1.2" />
<path d="M1459.8 237.4 L1459.8 239.5" fill="none" stroke="#2a2a2a" stroke-width="1.0" />
<path d="M1463.1 242.8 L1463.1 263.7" fill="none" stroke="#9d9d9d" stroke-width="1.35" />
<path d="M1463.1 242.8 L1463.1 245.4" fill="none" stroke="#5a5a5a" stroke-width="1.2" />
<path d="M1463.1 236.1 L1463.1 239.5" fill="none" stroke="#2a2a2a" stroke-width="1.0" />
<path d="M1463.1 242.8 L1463.1 264.9" fill="none" stroke="#161616" stroke-width="0.9" />
<path d="M1466.3 242.8 L1466.3 263.7" fill="none" stroke="#9d9d9d" stroke-width="1.35" />
<path d="M1466.3 242.8 L1466.3 245.4" fill="none" stroke="#5a5a5a" stroke-width="1.2" />
<path d="M1466.3 237.4 L1466.3 239.5" fill="none" stroke="#2a2a2a" stroke-width="1.0" />
<path d="M1469.6 242.8 L1469.6 263.7" fill="none" stroke="#9d9d9d" stroke-width="1.35" />
<path d="M1469.6 242.8 L1469.6 245.4" fill="none" stroke="#5a5a5a" stroke-width="1.2" />
<path d="M1469.6 236.1 L1469.6 239.5" fill="none" stroke="#2a2a2a" stroke-width="1.0" />
<path d="M1469.6 242.8 L1469.6 264.9" fill="none" stroke="#161616" stroke-width="0.9" />
<path d="M1472.8 242.8 L1472.8 263.7" fill="none" stroke="#9d9d9d" stroke-width="1.35" />
<path d="M1472.8 242.8 L1472.8 245.4" fill="none" stroke="#5a5a5a" stroke-width="1.2" />
<path d="M1472.8 237.4 L1472.8 239.5" fill="none" stroke="#2a2a2a" stroke-width="1.0" />
<path d="M1476.1 242.8 L1476.1 263.7" fill="none" stroke="#9d9d9d" stroke-width="1.35" />
<path d="M1476.1 242.8 L1476.1 245.4" fill="none" stroke="#5a5a5a" stroke-width="1.2" />
<path d="M1476.1 236.1 L1476.1 239.5" fill="none" stroke="#2a2a2a" stroke-width="1.0" />
<path d="M1479.4 242.8 L1479.4 263.7" fill="none" stroke="#9d9d9d" stroke-width="1.35" />
<path d="M1479.4 242.8 L1479.4 245.4" fill="none" stroke="#5a5a5a" stroke-width="1.2" />
<path d="M1479.4 237.4 L1479.4 239.5" fill="none" stroke="#2a2a2a" stroke-width="1.0" />
<path d="M1479.4 242.8 L1479.4 264.9" fill="none" stroke="#161616" stroke-width="0.9" />
<path d="M1482.6 242.8 L1482.6 263.7" fill="none" stroke="#9d9d9d" stroke-width="1.35" />
<path d="M1482.6 242.8 L1482.6 245.4" fill="none" stroke="#5a5a5a" stroke-width="1.2" />
<path d="M1482.6 236.1 L1482.6 239.5" fill="none" stroke="#2a2a2a" stroke-width="1.0" />
<path d="M1485.9 242.8 L1485.9 263.7" fill="none" stroke="#9d9d9d" stroke-width="1.35" />
<path d="M1485.9 242.8 L1485.9 245.4" fill="none" stroke="#5a5a5a" stroke-width="1.2" />
<path d="M1485.9 237.4 L1485.9 239.5" fill="none" stroke="#2a2a2a" stroke-width="1.0" />
<path d="M1489.2 242.8 L1489.2 263.7" fill="none" stroke="#9d9d9d" stroke-width="1.35" />
<path d="M1489.2 242.8 L1489.2 245.4" fill="none" stroke="#5a5a5a" stroke-width="1.2" />
<path d="M1489.2 236.1 L1489.2 239.5" fill="none" stroke="#2a2a2a" stroke-width="1.0" />
<path d="M1492.4 242.8 L1492.4 263.7" fill="none" stroke="#9d9d9d" stroke-width="1.35" />
<path d="M1492.4 242.8 L1492.4 245.4" fill="none" stroke="#5a5a5a" stroke-width="1.2" />
<path d="M1492.4 237.4 L1492.4 239.5" fill="none" stroke="#2a2a2a" stroke-width="1.0" />
<path d="M1495.7 242.8 L1495.7 263.7" fill="none" stroke="#9d9d9d" stroke-width="1.35" />
<path d="M1495.7 242.8 L1495.7 245.4" fill="none" stroke="#5a5a5a" stroke-width="1.2" />
<path d="M1495.7 236.1 L1495.7 239.5" fill="none" stroke="#2a2a2a" stroke-width="1.0" />
<path d="M1498.9 242.8 L1498.9 263.7" fill="none" stroke="#9d9d9d" stroke-width="1.35" />
<path d="M1498.9 242.8 L1498.9 245.4" fill="none" stroke="#5a5a5a" stroke-width="1.2" />
<path d="M1498.9 237.4 L1498.9 239.5" fill="none" stroke="#2a2a2a" stroke-width="1.0" />
<path d="M1498.9 242.8 L1498.9 264.9" fill="none" stroke="#161616" stroke-width="0.9" />
<path d="M1502.2 242.8 L1502.2 263.7" fill="none" stroke="#9d9d9d" stroke-width="1.35" />
<path d="M1502.2 242.8 L1502.2 245.4" fill="none" stroke="#5a5a5a" stroke-width="1.2" />
<path d="M1502.2 236.1 L1502.2 239.5" fill="none" stroke="#2a2a2a" stroke-width="1.0" />
<path d="M1505.5 242.8 L1505.5 263.7" fill="none" stroke="#9d9d9d" stroke-width="1.35" />
<path d="M1505.5 242.8 L1505.5 245.4" fill="none" stroke="#5a5a5a" stroke-width="1.2" />
<path d="M1505.5 237.4 L1505.5 239.5" fill="none" stroke="#2a2a2a" stroke-width="1.0" />
<path d="M1505.5 242.8 L1505.5 264.9" fill="none" stroke="#161616" stroke-width="0.9" />
<path d="M1508.7 242.8 L1508.7 263.7" fill="none" stroke="#9d9d9d" stroke-width="1.35" />
<path d="M1508.7 242.8 L1508.7 245.4" fill="none" stroke="#5a5a5a" stroke-width="1.2" />
<path d="M1508.7 236.1 L1508.7 239.5" fill="none" stroke="#2a2a2a" stroke-width="1.0" />
<path d="M1512.0 242.8 L1512.0 263.7" fill="none" stroke="#9d9d9d" stroke-width="1.35" />
<path d="M1512.0 242.8 L1512.0 245.4" fill="none" stroke="#5a5a5a" stroke-width="1.2" />
<path d="M1512.0 237.4 L1512.0 239.5" fill="none" stroke="#2a2a2a" stroke-width="1.0" />
<path d="M1515.3 242.8 L1515.3 263.7" fill="none" stroke="#9d9d9d" stroke-width="1.35" />
<path d="M1515.3 242.8 L1515.3 245.4" fill="none" stroke="#5a5a5a" stroke-width="1.2" />
<path d="M1515.3 236.1 L1515.3 239.5" fill="none" stroke="#2a2a2a" stroke-width="1.0" />
<path d="M1518.5 242.8 L1518.5 263.7" fill="none" stroke="#9d9d9d" stroke-width="1.35" />
<path d="M1518.5 242.8 L1518.5 245.4" fill="none" stroke="#5a5a5a" stroke-width="1.2" />
<path d="M1518.5 237.4 L1518.5 239.5" fill="none" stroke="#2a2a2a" stroke-width="1.0" />
<path d="M1521.8 242.8 L1521.8 263.7" fill="none" stroke="#9d9d9d" stroke-width="1.35" />
<path d="M1521.8 242.8 L1521.8 245.4" fill="none" stroke="#5a5a5a" stroke-width="1.2" />
<path d="M1521.8 236.1 L1521.8 239.5" fill="none" stroke="#2a2a2a" stroke-width="1.0" />
<path d="M1525.0 242.8 L1525.0 263.7" fill="none" stroke="#9d9d9d" stroke-width="1.35" />
<path d="M1525.0 242.8 L1525.0 245.4" fill="none" stroke="#5a5a5a" stroke-width="1.2" />
<path d="M1525.0 237.4 L1525.0 239.5" fill="none" stroke="#2a2a2a" stroke-width="1.0" />
<path d="M1528.3 242.8 L1528.3 263.7" fill="none" stroke="#9d9d9d" stroke-width="1.35" />
<path d="M1528.3 242.8 L1528.3 245.4" fill="none" stroke="#5a5a5a" stroke-width="1.2" />
<path d="M1528.3 236.1 L1528.3 239.5" fill="none" stroke="#2a2a2a" stroke-width="1.0" />
<path d="M1531.6 242.8 L1531.6 263.7" fill="none" stroke="#9d9d9d" stroke-width="1.35" />
<path d="M1531.6 242.8 L1531.6 245.4" fill="none" stroke="#5a5a5a" stroke-width="1.2" />
<path d="M1531.6 237.4 L1531.6 239.5" fill="none" stroke="#2a2a2a" stroke-width="1.0" />
<path d="M1534.8 242.8 L1534.8 263.7" fill="none" stroke="#9d9d9d" stroke-width="1.35" />
<path d="M1534.8 242.8 L1534.8 245.4" fill="none" stroke="#5a5a5a" stroke-width="1.2" />
<path d="M1534.8 236.1 L1534.8 239.5" fill="none" stroke="#2a2a2a" stroke-width="1.0" />
<path d="M1534.8 242.8 L1534.8 264.9" fill="none" stroke="#161616" stroke-width="0.9" />
<path d="M1538.1 242.8 L1538.1 263.7" fill="none" stroke="#9d9d9d" stroke-width="1.35" />
<path d="M1538.1 242.8 L1538.1 245.4" fill="none" stroke="#5a5a5a" stroke-width="1.2" />
<path d="M1538.1 237.4 L1538.1 239.5" fill="none" stroke="#2a2a2a" stroke-width="1.0" />
<rect x="1450.0" y="239.2" width="88.1" height="3.6" rx="0" fill="#030303" stroke="none" stroke-width="0"/>
<path d="M1455.0 241.7 L1535.1 241.7" fill="none" stroke="#8a8a8a" stroke-width="0.6" stroke-dasharray="0.8 3.1 1.6 4.2 0.8 9"/>
<path d="M1450.0 255.4 L1538.1 255.4" fill="none" stroke="#0a0a0a" stroke-width="1.05" />
<rect x="1450.0" y="263.6" width="88.1" height="1.4" rx="0" fill="#6e6e6e" stroke="none" stroke-width="0"/>
<path d="M1450.5 265.5 L1537.6 265.5" fill="none" stroke="#1a1a1a" stroke-width="1.1" />
<rect x="1601.3" y="256.1" width="148.1" height="8.5" rx="0" fill="#868686" stroke="none" stroke-width="0"/>
<path d="M1607.0 256.4 L1608.5 252.0 L1611.5 253.5 L1613.0 256.4 Z" fill="#9c9c9c"/>
<path d="M1656.0 256.4 L1657.5 250.5 L1669.5 252.0 L1671.0 256.4 Z" fill="#9c9c9c"/>
<path d="M1680.0 256.4 L1681.5 249.5 L1698.5 251.0 L1700.0 256.4 Z" fill="#9c9c9c"/>
<path d="M1735.0 256.4 L1736.5 251.0 L1741.5 252.5 L1743.0 256.4 Z" fill="#9c9c9c"/>
<path d="M1625.0 256.4 L1626.5 253.0 L1628.5 254.5 L1630.0 256.4 Z" fill="#9c9c9c"/>
<rect x="1606.0" y="256.7" width="6.0" height="6.2" rx="0" fill="#f2f2f2" stroke="none" stroke-width="0"/>
<rect x="1630.0" y="256.7" width="10.0" height="6.2" rx="0" fill="#f2f2f2" stroke="none" stroke-width="0"/>
<rect x="1652.0" y="256.7" width="6.0" height="6.2" rx="0" fill="#f2f2f2" stroke="none" stroke-width="0"/>
<rect x="1697.0" y="256.7" width="7.0" height="6.2" rx="0" fill="#f2f2f2" stroke="none" stroke-width="0"/>
<rect x="1717.0" y="256.7" width="7.0" height="6.2" rx="0" fill="#f2f2f2" stroke="none" stroke-width="0"/>
<rect x="1741.0" y="256.7" width="5.0" height="6.2" rx="0" fill="#f2f2f2" stroke="none" stroke-width="0"/>
<path d="M1601.3 243.5 L1601.3 263.0" fill="none" stroke="#9d9d9d" stroke-width="1.35" />
<path d="M1601.3 243.5 L1601.3 246.1" fill="none" stroke="#5a5a5a" stroke-width="1.2" />
<path d="M1601.3 236.6 L1601.3 240.2" fill="none" stroke="#2a2a2a" stroke-width="1.0" />
<path d="M1604.6 243.5 L1604.6 263.0" fill="none" stroke="#9d9d9d" stroke-width="1.35" />
<path d="M1604.6 243.5 L1604.6 246.1" fill="none" stroke="#5a5a5a" stroke-width="1.2" />
<path d="M1604.6 237.9 L1604.6 240.2" fill="none" stroke="#2a2a2a" stroke-width="1.0" />
<path d="M1607.9 243.5 L1607.9 263.0" fill="none" stroke="#9d9d9d" stroke-width="1.35" />
<path d="M1607.9 243.5 L1607.9 246.1" fill="none" stroke="#5a5a5a" stroke-width="1.2" />
<path d="M1607.9 236.6 L1607.9 240.2" fill="none" stroke="#2a2a2a" stroke-width="1.0" />
<path d="M1611.2 243.5 L1611.2 263.0" fill="none" stroke="#9d9d9d" stroke-width="1.35" />
<path d="M1611.2 243.5 L1611.2 246.1" fill="none" stroke="#5a5a5a" stroke-width="1.2" />
<path d="M1611.2 237.9 L1611.2 240.2" fill="none" stroke="#2a2a2a" stroke-width="1.0" />
<path d="M1614.5 243.5 L1614.5 263.0" fill="none" stroke="#9d9d9d" stroke-width="1.35" />
<path d="M1614.5 243.5 L1614.5 246.1" fill="none" stroke="#5a5a5a" stroke-width="1.2" />
<path d="M1614.5 236.6 L1614.5 240.2" fill="none" stroke="#2a2a2a" stroke-width="1.0" />
<path d="M1614.5 243.5 L1614.5 264.2" fill="none" stroke="#161616" stroke-width="0.9" />
<path d="M1617.8 243.5 L1617.8 263.0" fill="none" stroke="#9d9d9d" stroke-width="1.35" />
<path d="M1617.8 243.5 L1617.8 246.1" fill="none" stroke="#5a5a5a" stroke-width="1.2" />
<path d="M1617.8 237.9 L1617.8 240.2" fill="none" stroke="#2a2a2a" stroke-width="1.0" />
<path d="M1621.0 243.5 L1621.0 263.0" fill="none" stroke="#9d9d9d" stroke-width="1.35" />
<path d="M1621.0 243.5 L1621.0 246.1" fill="none" stroke="#5a5a5a" stroke-width="1.2" />
<path d="M1621.0 236.6 L1621.0 240.2" fill="none" stroke="#2a2a2a" stroke-width="1.0" />
<path d="M1621.0 243.5 L1621.0 264.2" fill="none" stroke="#161616" stroke-width="0.9" />
<path d="M1624.3 243.5 L1624.3 263.0" fill="none" stroke="#9d9d9d" stroke-width="1.35" />
<path d="M1624.3 243.5 L1624.3 246.1" fill="none" stroke="#5a5a5a" stroke-width="1.2" />
<path d="M1624.3 237.9 L1624.3 240.2" fill="none" stroke="#2a2a2a" stroke-width="1.0" />
<path d="M1627.6 243.5 L1627.6 263.0" fill="none" stroke="#9d9d9d" stroke-width="1.35" />
<path d="M1627.6 243.5 L1627.6 246.1" fill="none" stroke="#5a5a5a" stroke-width="1.2" />
<path d="M1627.6 236.6 L1627.6 240.2" fill="none" stroke="#2a2a2a" stroke-width="1.0" />
<path d="M1630.9 243.5 L1630.9 263.0" fill="none" stroke="#9d9d9d" stroke-width="1.35" />
<path d="M1630.9 243.5 L1630.9 246.1" fill="none" stroke="#5a5a5a" stroke-width="1.2" />
<path d="M1630.9 237.9 L1630.9 240.2" fill="none" stroke="#2a2a2a" stroke-width="1.0" />
<path d="M1630.9 243.5 L1630.9 264.2" fill="none" stroke="#161616" stroke-width="0.9" />
<path d="M1634.2 243.5 L1634.2 263.0" fill="none" stroke="#9d9d9d" stroke-width="1.35" />
<path d="M1634.2 243.5 L1634.2 246.1" fill="none" stroke="#5a5a5a" stroke-width="1.2" />
<path d="M1634.2 236.6 L1634.2 240.2" fill="none" stroke="#2a2a2a" stroke-width="1.0" />
<path d="M1637.5 243.5 L1637.5 263.0" fill="none" stroke="#9d9d9d" stroke-width="1.35" />
<path d="M1637.5 243.5 L1637.5 246.1" fill="none" stroke="#5a5a5a" stroke-width="1.2" />
<path d="M1637.5 237.9 L1637.5 240.2" fill="none" stroke="#2a2a2a" stroke-width="1.0" />
<path d="M1640.8 243.5 L1640.8 263.0" fill="none" stroke="#9d9d9d" stroke-width="1.35" />
<path d="M1640.8 243.5 L1640.8 246.1" fill="none" stroke="#5a5a5a" stroke-width="1.2" />
<path d="M1640.8 236.6 L1640.8 240.2" fill="none" stroke="#2a2a2a" stroke-width="1.0" />
<path d="M1644.1 243.5 L1644.1 263.0" fill="none" stroke="#9d9d9d" stroke-width="1.35" />
<path d="M1644.1 243.5 L1644.1 246.1" fill="none" stroke="#5a5a5a" stroke-width="1.2" />
<path d="M1644.1 237.9 L1644.1 240.2" fill="none" stroke="#2a2a2a" stroke-width="1.0" />
<path d="M1647.4 243.5 L1647.4 263.0" fill="none" stroke="#9d9d9d" stroke-width="1.35" />
<path d="M1647.4 243.5 L1647.4 246.1" fill="none" stroke="#5a5a5a" stroke-width="1.2" />
<path d="M1647.4 236.6 L1647.4 240.2" fill="none" stroke="#2a2a2a" stroke-width="1.0" />
<path d="M1650.7 243.5 L1650.7 263.0" fill="none" stroke="#9d9d9d" stroke-width="1.35" />
<path d="M1650.7 243.5 L1650.7 246.1" fill="none" stroke="#5a5a5a" stroke-width="1.2" />
<path d="M1650.7 237.9 L1650.7 240.2" fill="none" stroke="#2a2a2a" stroke-width="1.0" />
<path d="M1650.7 243.5 L1650.7 264.2" fill="none" stroke="#161616" stroke-width="0.9" />
<path d="M1654.0 243.5 L1654.0 263.0" fill="none" stroke="#9d9d9d" stroke-width="1.35" />
<path d="M1654.0 243.5 L1654.0 246.1" fill="none" stroke="#5a5a5a" stroke-width="1.2" />
<path d="M1654.0 236.6 L1654.0 240.2" fill="none" stroke="#2a2a2a" stroke-width="1.0" />
<path d="M1657.2 243.5 L1657.2 263.0" fill="none" stroke="#9d9d9d" stroke-width="1.35" />
<path d="M1657.2 243.5 L1657.2 246.1" fill="none" stroke="#5a5a5a" stroke-width="1.2" />
<path d="M1657.2 237.9 L1657.2 240.2" fill="none" stroke="#2a2a2a" stroke-width="1.0" />
<path d="M1657.2 243.5 L1657.2 264.2" fill="none" stroke="#161616" stroke-width="0.9" />
<path d="M1660.5 243.5 L1660.5 263.0" fill="none" stroke="#9d9d9d" stroke-width="1.35" />
<path d="M1660.5 243.5 L1660.5 246.1" fill="none" stroke="#5a5a5a" stroke-width="1.2" />
<path d="M1660.5 236.6 L1660.5 240.2" fill="none" stroke="#2a2a2a" stroke-width="1.0" />
<path d="M1663.8 243.5 L1663.8 263.0" fill="none" stroke="#9d9d9d" stroke-width="1.35" />
<path d="M1663.8 243.5 L1663.8 246.1" fill="none" stroke="#5a5a5a" stroke-width="1.2" />
<path d="M1663.8 237.9 L1663.8 240.2" fill="none" stroke="#2a2a2a" stroke-width="1.0" />
<path d="M1667.1 243.5 L1667.1 263.0" fill="none" stroke="#9d9d9d" stroke-width="1.35" />
<path d="M1667.1 243.5 L1667.1 246.1" fill="none" stroke="#5a5a5a" stroke-width="1.2" />
<path d="M1667.1 236.6 L1667.1 240.2" fill="none" stroke="#2a2a2a" stroke-width="1.0" />
<path d="M1670.4 243.5 L1670.4 263.0" fill="none" stroke="#9d9d9d" stroke-width="1.35" />
<path d="M1670.4 243.5 L1670.4 246.1" fill="none" stroke="#5a5a5a" stroke-width="1.2" />
<path d="M1670.4 237.9 L1670.4 240.2" fill="none" stroke="#2a2a2a" stroke-width="1.0" />
<path d="M1673.7 243.5 L1673.7 263.0" fill="none" stroke="#9d9d9d" stroke-width="1.35" />
<path d="M1673.7 243.5 L1673.7 246.1" fill="none" stroke="#5a5a5a" stroke-width="1.2" />
<path d="M1673.7 236.6 L1673.7 240.2" fill="none" stroke="#2a2a2a" stroke-width="1.0" />
<path d="M1677.0 243.5 L1677.0 263.0" fill="none" stroke="#9d9d9d" stroke-width="1.35" />
<path d="M1677.0 243.5 L1677.0 246.1" fill="none" stroke="#5a5a5a" stroke-width="1.2" />
<path d="M1677.0 237.9 L1677.0 240.2" fill="none" stroke="#2a2a2a" stroke-width="1.0" />
<path d="M1680.3 243.5 L1680.3 263.0" fill="none" stroke="#9d9d9d" stroke-width="1.35" />
<path d="M1680.3 243.5 L1680.3 246.1" fill="none" stroke="#5a5a5a" stroke-width="1.2" />
<path d="M1680.3 236.6 L1680.3 240.2" fill="none" stroke="#2a2a2a" stroke-width="1.0" />
<path d="M1683.6 243.5 L1683.6 263.0" fill="none" stroke="#9d9d9d" stroke-width="1.35" />
<path d="M1683.6 243.5 L1683.6 246.1" fill="none" stroke="#5a5a5a" stroke-width="1.2" />
<path d="M1683.6 237.9 L1683.6 240.2" fill="none" stroke="#2a2a2a" stroke-width="1.0" />
<path d="M1686.9 243.5 L1686.9 263.0" fill="none" stroke="#9d9d9d" stroke-width="1.35" />
<path d="M1686.9 243.5 L1686.9 246.1" fill="none" stroke="#5a5a5a" stroke-width="1.2" />
<path d="M1686.9 236.6 L1686.9 240.2" fill="none" stroke="#2a2a2a" stroke-width="1.0" />
<path d="M1686.9 243.5 L1686.9 264.2" fill="none" stroke="#161616" stroke-width="0.9" />
<path d="M1690.2 243.5 L1690.2 263.0" fill="none" stroke="#9d9d9d" stroke-width="1.35" />
<path d="M1690.2 243.5 L1690.2 246.1" fill="none" stroke="#5a5a5a" stroke-width="1.2" />
<path d="M1690.2 237.9 L1690.2 240.2" fill="none" stroke="#2a2a2a" stroke-width="1.0" />
<path d="M1693.5 243.5 L1693.5 263.0" fill="none" stroke="#9d9d9d" stroke-width="1.35" />
<path d="M1693.5 243.5 L1693.5 246.1" fill="none" stroke="#5a5a5a" stroke-width="1.2" />
<path d="M1693.5 236.6 L1693.5 240.2" fill="none" stroke="#2a2a2a" stroke-width="1.0" />
<path d="M1693.5 243.5 L1693.5 264.2" fill="none" stroke="#161616" stroke-width="0.9" />
<path d="M1696.7 243.5 L1696.7 263.0" fill="none" stroke="#9d9d9d" stroke-width="1.35" />
<path d="M1696.7 243.5 L1696.7 246.1" fill="none" stroke="#5a5a5a" stroke-width="1.2" />
<path d="M1696.7 237.9 L1696.7 240.2" fill="none" stroke="#2a2a2a" stroke-width="1.0" />
<path d="M1700.0 243.5 L1700.0 263.0" fill="none" stroke="#9d9d9d" stroke-width="1.35" />
<path d="M1700.0 243.5 L1700.0 246.1" fill="none" stroke="#5a5a5a" stroke-width="1.2" />
<path d="M1700.0 236.6 L1700.0 240.2" fill="none" stroke="#2a2a2a" stroke-width="1.0" />
<path d="M1703.3 243.5 L1703.3 263.0" fill="none" stroke="#9d9d9d" stroke-width="1.35" />
<path d="M1703.3 243.5 L1703.3 246.1" fill="none" stroke="#5a5a5a" stroke-width="1.2" />
<path d="M1703.3 237.9 L1703.3 240.2" fill="none" stroke="#2a2a2a" stroke-width="1.0" />
<path d="M1706.6 243.5 L1706.6 263.0" fill="none" stroke="#9d9d9d" stroke-width="1.35" />
<path d="M1706.6 243.5 L1706.6 246.1" fill="none" stroke="#5a5a5a" stroke-width="1.2" />
<path d="M1706.6 236.6 L1706.6 240.2" fill="none" stroke="#2a2a2a" stroke-width="1.0" />
<path d="M1709.9 243.5 L1709.9 263.0" fill="none" stroke="#9d9d9d" stroke-width="1.35" />
<path d="M1709.9 243.5 L1709.9 246.1" fill="none" stroke="#5a5a5a" stroke-width="1.2" />
<path d="M1709.9 237.9 L1709.9 240.2" fill="none" stroke="#2a2a2a" stroke-width="1.0" />
<path d="M1713.2 243.5 L1713.2 263.0" fill="none" stroke="#9d9d9d" stroke-width="1.35" />
<path d="M1713.2 243.5 L1713.2 246.1" fill="none" stroke="#5a5a5a" stroke-width="1.2" />
<path d="M1713.2 236.6 L1713.2 240.2" fill="none" stroke="#2a2a2a" stroke-width="1.0" />
<path d="M1716.5 243.5 L1716.5 263.0" fill="none" stroke="#9d9d9d" stroke-width="1.35" />
<path d="M1716.5 243.5 L1716.5 246.1" fill="none" stroke="#5a5a5a" stroke-width="1.2" />
<path d="M1716.5 237.9 L1716.5 240.2" fill="none" stroke="#2a2a2a" stroke-width="1.0" />
<path d="M1719.8 243.5 L1719.8 263.0" fill="none" stroke="#9d9d9d" stroke-width="1.35" />
<path d="M1719.8 243.5 L1719.8 246.1" fill="none" stroke="#5a5a5a" stroke-width="1.2" />
<path d="M1719.8 236.6 L1719.8 240.2" fill="none" stroke="#2a2a2a" stroke-width="1.0" />
<path d="M1723.1 243.5 L1723.1 263.0" fill="none" stroke="#9d9d9d" stroke-width="1.35" />
<path d="M1723.1 243.5 L1723.1 246.1" fill="none" stroke="#5a5a5a" stroke-width="1.2" />
<path d="M1723.1 237.9 L1723.1 240.2" fill="none" stroke="#2a2a2a" stroke-width="1.0" />
<path d="M1723.1 243.5 L1723.1 264.2" fill="none" stroke="#161616" stroke-width="0.9" />
<path d="M1726.4 243.5 L1726.4 263.0" fill="none" stroke="#9d9d9d" stroke-width="1.35" />
<path d="M1726.4 243.5 L1726.4 246.1" fill="none" stroke="#5a5a5a" stroke-width="1.2" />
<path d="M1726.4 236.6 L1726.4 240.2" fill="none" stroke="#2a2a2a" stroke-width="1.0" />
<path d="M1729.7 243.5 L1729.7 263.0" fill="none" stroke="#9d9d9d" stroke-width="1.35" />
<path d="M1729.7 243.5 L1729.7 246.1" fill="none" stroke="#5a5a5a" stroke-width="1.2" />
<path d="M1729.7 237.9 L1729.7 240.2" fill="none" stroke="#2a2a2a" stroke-width="1.0" />
<path d="M1729.7 243.5 L1729.7 264.2" fill="none" stroke="#161616" stroke-width="0.9" />
<path d="M1732.9 243.5 L1732.9 263.0" fill="none" stroke="#9d9d9d" stroke-width="1.35" />
<path d="M1732.9 243.5 L1732.9 246.1" fill="none" stroke="#5a5a5a" stroke-width="1.2" />
<path d="M1732.9 236.6 L1732.9 240.2" fill="none" stroke="#2a2a2a" stroke-width="1.0" />
<path d="M1736.2 243.5 L1736.2 263.0" fill="none" stroke="#9d9d9d" stroke-width="1.35" />
<path d="M1736.2 243.5 L1736.2 246.1" fill="none" stroke="#5a5a5a" stroke-width="1.2" />
<path d="M1736.2 237.9 L1736.2 240.2" fill="none" stroke="#2a2a2a" stroke-width="1.0" />
<path d="M1739.5 243.5 L1739.5 263.0" fill="none" stroke="#9d9d9d" stroke-width="1.35" />
<path d="M1739.5 243.5 L1739.5 246.1" fill="none" stroke="#5a5a5a" stroke-width="1.2" />
<path d="M1739.5 236.6 L1739.5 240.2" fill="none" stroke="#2a2a2a" stroke-width="1.0" />
<path d="M1742.8 243.5 L1742.8 263.0" fill="none" stroke="#9d9d9d" stroke-width="1.35" />
<path d="M1742.8 243.5 L1742.8 246.1" fill="none" stroke="#5a5a5a" stroke-width="1.2" />
<path d="M1742.8 237.9 L1742.8 240.2" fill="none" stroke="#2a2a2a" stroke-width="1.0" />
<path d="M1742.8 243.5 L1742.8 264.2" fill="none" stroke="#161616" stroke-width="0.9" />
<path d="M1746.1 243.5 L1746.1 263.0" fill="none" stroke="#9d9d9d" stroke-width="1.35" />
<path d="M1746.1 243.5 L1746.1 246.1" fill="none" stroke="#5a5a5a" stroke-width="1.2" />
<path d="M1746.1 236.6 L1746.1 240.2" fill="none" stroke="#2a2a2a" stroke-width="1.0" />
<path d="M1749.4 243.5 L1749.4 263.0" fill="none" stroke="#9d9d9d" stroke-width="1.35" />
<path d="M1749.4 243.5 L1749.4 246.1" fill="none" stroke="#5a5a5a" stroke-width="1.2" />
<path d="M1749.4 237.9 L1749.4 240.2" fill="none" stroke="#2a2a2a" stroke-width="1.0" />
<rect x="1601.3" y="239.9" width="148.1" height="3.6" rx="0" fill="#030303" stroke="none" stroke-width="0"/>
<path d="M1606.3 242.4 L1746.4 242.4" fill="none" stroke="#8a8a8a" stroke-width="0.6" stroke-dasharray="0.8 3.1 1.6 4.2 0.8 9"/>
<path d="M1601.3 256.4 L1749.4 256.4" fill="none" stroke="#0a0a0a" stroke-width="1.05" />
<rect x="1601.3" y="262.9" width="148.1" height="1.4" rx="0" fill="#6e6e6e" stroke="none" stroke-width="0"/>
<path d="M1601.8 264.8 L1748.9 264.8" fill="none" stroke="#1a1a1a" stroke-width="1.1" />
<circle cx="1494" cy="235.2" r="1.1" fill="#111"/>
<path d="M1494.0 235.2 L1494.0 239.5" fill="none" stroke="#111" stroke-width="1.0" />
<circle cx="1635.6" cy="235.6" r="1.1" fill="#111"/>
<path d="M1635.6 235.6 L1635.6 239.5" fill="none" stroke="#111" stroke-width="1.0" />
<circle cx="1714.4" cy="235.6" r="1.1" fill="#111"/>
<path d="M1714.4 235.6 L1714.4 239.5" fill="none" stroke="#111" stroke-width="1.0" />
<path d="M1451.5 265.5 L1451.5 273.0" fill="none" stroke="#888" stroke-width="0.7" />
<path d="M1538.0 265.5 L1538.0 271.0" fill="none" stroke="#888" stroke-width="0.7" />
<rect x="1536.3" y="233.8" width="17.7" height="2.5" rx="0" fill="#fff" stroke="#444" stroke-width="0.8"/>
<path d="M1536.0 233.9 L1554.3 233.9" fill="none" stroke="#111" stroke-width="1.3" />
<rect x="1538.1" y="236.3" width="14.4" height="28.7" rx="0" fill="#fff" stroke="#333" stroke-width="0.9"/>
<rect x="1537.5" y="265.0" width="15.6" height="6.3" rx="0" fill="#fff" stroke="#444" stroke-width="0.8"/>
<rect x="1541.3" y="241.3" width="8.1" height="20.6" rx="1" fill="none" stroke="#333" stroke-width="0.9"/>
<rect x="1540.3" y="240.3" width="10.1" height="22.6" rx="1" fill="none" stroke="#aaa" stroke-width="0.5"/>
<rect x="1584.4" y="234.8" width="19.1" height="2.1" rx="0" fill="#fff" stroke="#444" stroke-width="0.8"/>
<path d="M1584.1 234.9 L1603.8 234.9" fill="none" stroke="#111" stroke-width="1.3" />
<rect x="1586.3" y="236.9" width="15.6" height="28.1" rx="0" fill="#fff" stroke="#333" stroke-width="0.9"/>
<rect x="1585.7" y="265.0" width="16.8" height="6.3" rx="0" fill="#fff" stroke="#444" stroke-width="0.8"/>
<rect x="1590.0" y="241.3" width="8.8" height="21.2" rx="1" fill="none" stroke="#333" stroke-width="0.9"/>
<rect x="1589.0" y="240.3" width="10.8" height="23.2" rx="1" fill="none" stroke="#aaa" stroke-width="0.5"/>
<path d="M1584.3 260.0 L1584.3 271.3" fill="none" stroke="#222" stroke-width="1.4" />
<rect x="1540.3" y="205.0" width="9.5" height="28.2" rx="0" fill="#fff" stroke="#111" stroke-width="1.0"/>
<path d="M1541.5 205.0 L1541.5 233.2" fill="none" stroke="#111" stroke-width="1.1" />
<path d="M1548.6 205.0 L1548.6 233.2" fill="none" stroke="#111" stroke-width="1.1" />
<path d="M1541.9 206.0 L1548.2 208.2 L1541.9 210.4" fill="none" stroke="#111" stroke-width="1.1" />
<path d="M1548.2 206.0 L1541.9 208.2" fill="none" stroke="#222" stroke-width="0.9" />
<path d="M1541.9 210.4 L1548.2 212.6 L1541.9 214.8" fill="none" stroke="#111" stroke-width="1.1" />
<path d="M1548.2 210.4 L1541.9 212.6" fill="none" stroke="#222" stroke-width="0.9" />
<path d="M1541.9 214.8 L1548.2 217.0 L1541.9 219.2" fill="none" stroke="#111" stroke-width="1.1" />
<path d="M1548.2 214.8 L1541.9 217.0" fill="none" stroke="#222" stroke-width="0.9" />
<path d="M1541.9 219.2 L1548.2 221.4 L1541.9 223.6" fill="none" stroke="#111" stroke-width="1.1" />
<path d="M1548.2 219.2 L1541.9 221.4" fill="none" stroke="#222" stroke-width="0.9" />
<path d="M1541.9 223.6 L1548.2 225.8 L1541.9 228.0" fill="none" stroke="#111" stroke-width="1.1" />
<path d="M1548.2 223.6 L1541.9 225.8" fill="none" stroke="#222" stroke-width="0.9" />
<path d="M1541.9 228.0 L1548.2 230.2 L1541.9 232.4" fill="none" stroke="#111" stroke-width="1.1" />
<path d="M1548.2 228.0 L1541.9 230.2" fill="none" stroke="#222" stroke-width="0.9" />
<rect x="1539.0" y="232.0" width="12.1" height="1.8" rx="0" fill="#111" stroke="none" stroke-width="0"/>
<rect x="1539.1" y="203.7" width="11.9" height="1.3" rx="0" fill="#111" stroke="none" stroke-width="0"/>
<path d="M1541.6 204.0 L1541.6 200.0" fill="none" stroke="#111" stroke-width="1.5" />
<path d="M1548.5 204.0 L1548.5 200.0" fill="none" stroke="#111" stroke-width="1.5" />
<rect x="1589.6" y="204.4" width="8.4" height="28.2" rx="0" fill="#fff" stroke="#111" stroke-width="1.0"/>
<path d="M1590.8 204.4 L1590.8 232.6" fill="none" stroke="#111" stroke-width="1.1" />
<path d="M1596.8 204.4 L1596.8 232.6" fill="none" stroke="#111" stroke-width="1.1" />
<path d="M1591.2 205.4 L1596.4 207.6 L1591.2 209.8" fill="none" stroke="#111" stroke-width="1.1" />
<path d="M1596.4 205.4 L1591.2 207.6" fill="none" stroke="#222" stroke-width="0.9" />
<path d="M1591.2 209.8 L1596.4 212.0 L1591.2 214.2" fill="none" stroke="#111" stroke-width="1.1" />
<path d="M1596.4 209.8 L1591.2 212.0" fill="none" stroke="#222" stroke-width="0.9" />
<path d="M1591.2 214.2 L1596.4 216.4 L1591.2 218.6" fill="none" stroke="#111" stroke-width="1.1" />
<path d="M1596.4 214.2 L1591.2 216.4" fill="none" stroke="#222" stroke-width="0.9" />
<path d="M1591.2 218.6 L1596.4 220.8 L1591.2 223.0" fill="none" stroke="#111" stroke-width="1.1" />
<path d="M1596.4 218.6 L1591.2 220.8" fill="none" stroke="#222" stroke-width="0.9" />
<path d="M1591.2 223.0 L1596.4 225.2 L1591.2 227.4" fill="none" stroke="#111" stroke-width="1.1" />
<path d="M1596.4 223.0 L1591.2 225.2" fill="none" stroke="#222" stroke-width="0.9" />
<path d="M1591.2 227.4 L1596.4 229.6 L1591.2 231.8" fill="none" stroke="#111" stroke-width="1.1" />
<path d="M1596.4 227.4 L1591.2 229.6" fill="none" stroke="#222" stroke-width="0.9" />
<rect x="1588.3" y="231.4" width="11.0" height="1.8" rx="0" fill="#111" stroke="none" stroke-width="0"/>
<rect x="1588.4" y="203.1" width="10.8" height="1.3" rx="0" fill="#111" stroke="none" stroke-width="0"/>
<path d="M1590.9 203.4 L1590.9 199.4" fill="none" stroke="#111" stroke-width="1.5" />
<path d="M1596.7 203.4 L1596.7 199.4" fill="none" stroke="#111" stroke-width="1.5" />
<rect x="1671.4" y="237.0" width="7.4" height="27.5" rx="0" fill="#fff" stroke="#111" stroke-width="1.0"/>
<path d="M1672.6 237.0 L1672.6 264.5" fill="none" stroke="#111" stroke-width="1.1" />
<path d="M1677.6 237.0 L1677.6 264.5" fill="none" stroke="#111" stroke-width="1.1" />
<path d="M1673.0 238.0 L1677.2 240.2 L1673.0 242.4" fill="none" stroke="#111" stroke-width="1.1" />
<path d="M1677.2 238.0 L1673.0 240.2" fill="none" stroke="#222" stroke-width="0.9" />
<path d="M1673.0 242.4 L1677.2 244.6 L1673.0 246.8" fill="none" stroke="#111" stroke-width="1.1" />
<path d="M1677.2 242.4 L1673.0 244.6" fill="none" stroke="#222" stroke-width="0.9" />
<path d="M1673.0 246.8 L1677.2 249.0 L1673.0 251.2" fill="none" stroke="#111" stroke-width="1.1" />
<path d="M1677.2 246.8 L1673.0 249.0" fill="none" stroke="#222" stroke-width="0.9" />
<path d="M1673.0 251.2 L1677.2 253.4 L1673.0 255.6" fill="none" stroke="#111" stroke-width="1.1" />
<path d="M1677.2 251.2 L1673.0 253.4" fill="none" stroke="#222" stroke-width="0.9" />
<path d="M1673.0 255.6 L1677.2 257.8 L1673.0 260.0" fill="none" stroke="#111" stroke-width="1.1" />
<path d="M1677.2 255.6 L1673.0 257.8" fill="none" stroke="#222" stroke-width="0.9" />
<path d="M1673.0 260.0 L1677.2 262.2 L1673.0 264.4" fill="none" stroke="#111" stroke-width="1.1" />
<path d="M1677.2 260.0 L1673.0 262.2" fill="none" stroke="#222" stroke-width="0.9" />
<rect x="1670.1" y="263.3" width="10.0" height="1.8" rx="0" fill="#111" stroke="none" stroke-width="0"/>
<rect x="1670.2" y="235.7" width="9.8" height="1.3" rx="0" fill="#111" stroke="none" stroke-width="0"/>
<path d="M1672.7 236.0 L1672.7 232.0" fill="none" stroke="#111" stroke-width="1.5" />
<path d="M1677.5 236.0 L1677.5 232.0" fill="none" stroke="#111" stroke-width="1.5" />
<rect x="1750.2" y="237.5" width="7.4" height="27.0" rx="0" fill="#fff" stroke="#111" stroke-width="1.0"/>
<path d="M1751.4 237.5 L1751.4 264.5" fill="none" stroke="#111" stroke-width="1.1" />
<path d="M1756.4 237.5 L1756.4 264.5" fill="none" stroke="#111" stroke-width="1.1" />
<path d="M1751.8 238.5 L1756.0 240.7 L1751.8 242.9" fill="none" stroke="#111" stroke-width="1.1" />
<path d="M1756.0 238.5 L1751.8 240.7" fill="none" stroke="#222" stroke-width="0.9" />
<path d="M1751.8 242.9 L1756.0 245.1 L1751.8 247.3" fill="none" stroke="#111" stroke-width="1.1" />
<path d="M1756.0 242.9 L1751.8 245.1" fill="none" stroke="#222" stroke-width="0.9" />
<path d="M1751.8 247.3 L1756.0 249.5 L1751.8 251.7" fill="none" stroke="#111" stroke-width="1.1" />
<path d="M1756.0 247.3 L1751.8 249.5" fill="none" stroke="#222" stroke-width="0.9" />
<path d="M1751.8 251.7 L1756.0 253.9 L1751.8 256.1" fill="none" stroke="#111" stroke-width="1.1" />
<path d="M1756.0 251.7 L1751.8 253.9" fill="none" stroke="#222" stroke-width="0.9" />
<path d="M1751.8 256.1 L1756.0 258.3 L1751.8 260.5" fill="none" stroke="#111" stroke-width="1.1" />
<path d="M1756.0 256.1 L1751.8 258.3" fill="none" stroke="#222" stroke-width="0.9" />
<path d="M1751.8 260.5 L1756.0 262.7 L1751.8 264.9" fill="none" stroke="#111" stroke-width="1.1" />
<path d="M1756.0 260.5 L1751.8 262.7" fill="none" stroke="#222" stroke-width="0.9" />
<rect x="1748.9" y="263.3" width="10.0" height="1.8" rx="0" fill="#111" stroke="none" stroke-width="0"/>
<rect x="1558.7" y="201.2" width="21.3" height="12.2" rx="0" fill="#fff" stroke="#555" stroke-width="0.9"/>
<path d="M1557.8 197.3 L1581.2 197.3" fill="none" stroke="#161616" stroke-width="1.3" />
<path d="M1557.8 197.3 L1556.6 200.9 L1582.6 200.9 L1581.2 197.3" fill="none" stroke="#222" stroke-width="0.9" />
<path d="M1556.6 201.1 L1582.6 201.1" fill="none" stroke="#1c1c1c" stroke-width="1.2" />
<path d="M1559.0 212.9 L1579.8 212.9" fill="none" stroke="#222" stroke-width="1.0" />
<path d="M1569.4 193.0 L1569.4 197.0" fill="none" stroke="#222" stroke-width="1.2" />
<rect x="1557.9" y="213.4" width="2.7" height="2.9" rx="0" fill="#fff" stroke="#444" stroke-width="0.8"/>
<rect x="1578.2" y="213.4" width="2.7" height="2.9" rx="0" fill="#fff" stroke="#444" stroke-width="0.8"/>
<path d="M1550 205.5 Q1555.9 205.0 1558.8 200.0" fill="none" stroke="#222" stroke-width="1.2"/>
<path d="M1550 207.5 Q1555.9 207.0 1558.8 201.8" fill="none" stroke="#222" stroke-width="0.9"/>
<path d="M1550 209.5 Q1555.9 209.0 1558.8 203.6" fill="none" stroke="#222" stroke-width="1.1"/>
<path d="M1550 211.5 Q1555.9 211.0 1558.8 205.4" fill="none" stroke="#222" stroke-width="0.8"/>
<path d="M1550.0 206.5 L1558.8 201.8" fill="none" stroke="#333" stroke-width="1.6" stroke-dasharray="1 0.9"/>
<path d="M1589.4 205.5 Q1583.2 205.0 1580 200.0" fill="none" stroke="#222" stroke-width="1.2"/>
<path d="M1589.4 207.5 Q1583.2 207.0 1580 201.8" fill="none" stroke="#222" stroke-width="0.9"/>
<path d="M1589.4 209.5 Q1583.2 209.0 1580 203.6" fill="none" stroke="#222" stroke-width="1.1"/>
<path d="M1589.4 211.5 Q1583.2 211.0 1580 205.4" fill="none" stroke="#222" stroke-width="0.8"/>
<path d="M1589.4 206.5 L1580.0 201.8" fill="none" stroke="#333" stroke-width="1.6" stroke-dasharray="1 0.9"/>
<path d="M1755.7 214.8 L1755.7 237.0" fill="none" stroke="#777" stroke-width="1.2" />
<path d="M1761.3 243.8 L1761.3 271.5" fill="none" stroke="#666" stroke-width="1.2" />
<path d="M1749.4 265.5 L1761.0 265.8" fill="none" stroke="#999" stroke-width="0.7" />
<path d="M1658.8 271.3 L1664.0 270.9" fill="none" stroke="#999" stroke-width="0.8" />
<path d="M1672.0 270.6 L1680.0 270.3" fill="none" stroke="#666" stroke-width="0.9" />
<path d="M1688.0 270.0 L1697.0 269.8 L1700.0 270.5" fill="none" stroke="#888" stroke-width="0.8" />
<path d="M1713.0 270.4 L1736.0 270.4" fill="none" stroke="#444" stroke-width="1.0" />
<path d="M1742.0 270.0 L1762.0 270.8" fill="none" stroke="#888" stroke-width="0.8" />
<path d="M1762.0 271.2 L1770.0 271.2" fill="none" stroke="#444" stroke-width="1.0" />
<path d="M1784.0 272.0 L1798.0 272.3" fill="none" stroke="#555" stroke-width="1.0" />
<path d="M1770.0 271.4 L1821.0 273.0" fill="none" stroke="#aaa" stroke-width="0.6" />
<path d="M1812.0 273.0 L1821.3 273.0 L1827.5 280.6" fill="none" stroke="#666" stroke-width="0.8" />
<path d="M1670.6 271.0 L1670.6 283.8" fill="none" stroke="#555" stroke-width="0.9" />
<path d="M1698.1 271.0 L1698.1 283.8" fill="none" stroke="#555" stroke-width="0.9" />
<path d="M1736.9 271.0 L1736.9 283.8" fill="none" stroke="#555" stroke-width="0.9" />
<path d="M1743.8 271.0 L1743.8 283.8" fill="none" stroke="#555" stroke-width="0.9" />
<path d="M1647.5 271.3 L1647.5 283.8" fill="none" stroke="#333" stroke-width="1.2" />
<path d="M1690.0 283.8 L1696.3 270.0" fill="none" stroke="#666" stroke-width="0.8" />
<path d="M1693.5 283.5 L1697.5 272.0" fill="none" stroke="#666" stroke-width="0.8" />
<path d="M1751.9 283.5 L1753.0 271.0" fill="none" stroke="#666" stroke-width="0.9" />
<path d="M1761.3 271.0 L1760.5 283.8" fill="none" stroke="#777" stroke-width="0.9" />
<path d="M1818.8 273.0 L1818.8 283.8" fill="none" stroke="#666" stroke-width="0.8" />
<path d="M1820.8 273.0 L1820.8 283.8" fill="none" stroke="#666" stroke-width="0.8" /></svg></div>
<div class="win" id="w3"><div class="abs" style="left:0;top:0;width:643px;height:32px;background:#f2f2f2"></div><div class="t" style="left:12px;top:8.600000000000023px;font-size:12px;letter-spacing:-0.1px">Photos - clifton3.PNG</div><svg class="ic" style="left:523px;top:11px" width="110" height="11" viewBox="0 0 110 11"><path d="M0 5.5h10M46.5 0.5h9v9h-9zM92 0l10 10M102 0L92 10" fill="none" stroke="#000" stroke-width="1"/></svg><div class="btn" style="left:0;top:32px;width:68px;height:48px"></div><svg class="ic" style="left:26px;top:48px" width="16" height="16" viewBox="0 0 16 16" ><rect x="0.5" y="0.5" width="15" height="15" fill="none" stroke="#fff" stroke-width="1"/><path d="M1 10.2L5.6 3.9 9.4 9.3 12.9 6.9 15 9.6V15H1Z" fill="#fff"/><path d="M9 8.2L12.9 14.6" stroke="#0078d7" stroke-width="0.9" fill="none"/></svg><svg class="ic" style="left:94px;top:48px" width="16" height="16" viewBox="0 0 16 16" ><path d="M0 8h16M8 0v16" fill="none" stroke="#555" stroke-width="1.1"/></svg><svg class="ic" style="left:214px;top:48px" width="16" height="16" viewBox="0 0 16 16" ><circle cx="5.6" cy="5.6" r="5" fill="none" stroke="#000" stroke-width="1.1"/><path d="M9.2 9.2L15.6 15.6M3.1 5.6h5M5.6 3.1v5" fill="none" stroke="#000" stroke-width="1.1"/></svg><svg class="ic" style="left:264px;top:48px" width="16" height="16" viewBox="0 0 16 16" ><path d="M1 2.6h13M5.5 2.5v-2h4v2M2.6 2.6v11.6q0 1.3 1.3 1.3h7.2q1.3 0 1.3-1.3v-11.6M5.5 5v8M7.5 5v8M9.5 5v8" fill="none" stroke="#000" stroke-width="1.1"/></svg><svg class="ic" style="left:314px;top:48px" width="16" height="16" viewBox="0 0 16 16" ><path d="M8 14.6L1.9 8.4C0.2 6.6 0.3 3.9 1.9 2.5C3.7 0.9 6.5 1.4 8 3.6C9.5 1.4 12.3 0.9 14.1 2.5C15.7 3.9 15.8 6.6 14.1 8.4Z" fill="none" stroke="#a6a6a6" stroke-width="1.1"/></svg><svg class="ic" style="left:364px;top:48px" width="16" height="16" viewBox="0 0 16 16" ><path d="M0.6 8A7.4 7.4 0 1 1 10.6 14.9" fill="none" stroke="#000" stroke-width="1.1"/><path d="M10.4 11.8v3.7h3.6" fill="none" stroke="#000" stroke-width="1.1" stroke-width="1.3"/><circle cx="8" cy="8.1" r="1.6" fill="none" stroke="#000" stroke-width="1.1"/></svg><svg class="ic" style="left:414px;top:48px" width="16" height="16" viewBox="0 0 16 16" ><path d="M3.5 0v12.5h12.5M0 3.5h12.5v12.5M3.5 12.5L16 0" fill="none" stroke="#000" stroke-width="1.1"/></svg><svg class="ic" style="left:477px;top:48.5px" width="17" height="16" viewBox="0 0 17 16" ><path d="M1.4 3.3A2.2 2.2 0 0 1 4.5 0.7L15.1 11.6 15.8 15.2 12.3 13.8Z" fill="#fff" stroke="#111" stroke-width="1" stroke-linejoin="round"/><path d="M3.3 4.7L5.9 2.3M12 11.8L14.3 9.6" fill="none" stroke="#111" stroke-width="1" stroke-linejoin="round" stroke-width="0.9"/><path d="M14.1 14.5l1.7 0.7-0.4-1.9z" fill="#111"/><path d="M13.6 1.1A1.4 1.4 0 0 1 15.5 3.1L7.3 11.6 5.2 9.5Z" fill="#fff" stroke="#111" stroke-width="1" stroke-linejoin="round"/><path d="M5.2 9.5L7.3 11.6C6.6 14 4.6 15.2 0.4 15.1C1.8 13.9 2 11.3 5.2 9.5Z" fill="#fff" stroke="#111" stroke-width="1" stroke-linejoin="round"/></svg><svg class="ic" style="left:502.8px;top:51px" width="9" height="6" viewBox="0 0 9 6" ><path d="M0.7 0.8L4.2 4.3 7.7 0.8" fill="none" stroke="#0078d7" stroke-width="1.5"/></svg><svg class="ic" style="left:553px;top:48.30000000000001px" width="16" height="14" viewBox="0 0 16 14" ><path d="M0.6 4v9.5h11v-2.6" fill="none" stroke="#000" stroke-width="1.1"/><path d="M3.7 9.9C4.3 5.6 7.3 3.5 10.6 3.4V0.7L15 5.3 10.6 9.9V7.3C7.6 7.2 5.3 8 3.7 9.9Z" fill="none" stroke="#000" stroke-width="1.1" stroke-linejoin="miter"/></svg><svg class="ic" style="left:612px;top:56px" width="14" height="2" viewBox="0 0 14 2" ><rect x="0" y="0" width="2" height="2"/><rect x="6" y="0" width="2" height="2"/><rect x="12" y="0" width="2" height="2"/></svg><svg class="ic" style="left:610px;top:503px" width="18" height="18" viewBox="0 0 18 18" ><path d="M1 17L17 1M11.5 0.7h5.8v5.8M0.7 11.5v5.8h5.8" fill="none" stroke="#111" stroke-width="1.3"/></svg><svg class="draw" style="left:-5px;top:-433px" width="660" height="971" viewBox="0 0 660 971"><defs><linearGradient id="colg" x1="0" x2="1" y1="0" y2="0"><stop offset="0" stop-color="#2e2e2e"/><stop offset="0.45" stop-color="#5a5a5a"/><stop offset="1" stop-color="#333"/></linearGradient></defs>
<rect x="37.0" y="591.0" width="525.0" height="267.8" fill="#707070" />
<rect x="37.0" y="591.0" width="25.3" height="257.0" fill="#616161" />
<path d="M62.4 591.0 L62.4 617.0" fill="none" stroke="#151515" stroke-width="1.0" />
<path d="M393.0 848.0 L393.0 660.0 L594.2 775.0 L594.2 848.0 Z" fill="#474747" stroke="none" stroke-width="0.8"/>
<rect x="62.6" y="626.0" width="238.4" height="222.0" fill="#474747" />
<rect x="53.0" y="665.0" width="255.3" height="183.0" fill="#474747" />
<rect x="53.0" y="665.0" width="9.6" height="183.0" fill="#505050" />
<rect x="37.0" y="847.9" width="553.3" height="10.9" fill="#707070" />
<path d="M37.0 847.9 L594.0 847.9" fill="none" stroke="#151515" stroke-width="1.0" />
<path d="M37.0 848.4 L110.5 848.4 L110.5 851.6 L37.0 851.6 Z" fill="#787878" stroke="none" stroke-width="0.8"/>
<path d="M37.0 851.6 L110.5 851.6 L110.5 848.2" fill="none" stroke="#222" stroke-width="0.7" />
<rect x="331.8" y="637.0" width="7.5" height="211.0" fill="#4b4b4b" />
<rect x="380.5" y="660.0" width="5.8" height="188.0" fill="#5a5a5a" />
<rect x="386.3" y="663.0" width="6.7" height="185.0" fill="#4b4b4b" />
<path d="M393.0 667.0 L393.0 848.0" fill="none" stroke="#151515" stroke-width="1.0" />
<path d="M449.2 699.0 L449.2 848.0" fill="none" stroke="#151515" stroke-width="0.9" />
<rect x="497.0" y="725.0" width="8.1" height="123.0" fill="#4c4c4c" />
<path d="M497.0 726.0 L497.0 848.0" fill="none" stroke="#151515" stroke-width="0.7" />
<path d="M505.1 730.0 L505.1 848.0" fill="none" stroke="#151515" stroke-width="1.0" />
<rect x="552.9" y="757.0" width="7.5" height="91.0" fill="#4c4c4c" />
<path d="M560.4 762.0 L560.4 848.0" fill="none" stroke="#151515" stroke-width="1.0" />
<path d="M47.8 660.1 L312.5 660.1 L309.5 665.9 L50.8 665.9 Z" fill="#2c2c2c" stroke="none" stroke-width="0.8"/>
<rect x="47.8" y="660.1" width="264.7" height="3.1" fill="#0c0c0c" />
<path d="M63.3 721.4 A16.3 16.3 0 0 1 95.9 721.4" fill="none" stroke="#1a1a1a" stroke-width="2.6" stroke-dasharray="2.2 0.8"/>
<path d="M62.0 721.4 A17.6 17.6 0 0 1 97.2 721.4" fill="none" stroke="#141414" stroke-width="0.7" />
<path d="M64.7 721.4 A14.9 14.9 0 0 1 94.5 721.4" fill="none" stroke="#141414" stroke-width="0.7" />
<path d="M70.4 719.9 A8.8 8.8 0 0 1 88.0 719.9" fill="none" stroke="#2a2a2a" stroke-width="0.7" />
<path d="M70.4 719.9 L70.4 753.0" fill="none" stroke="#2e2e2e" stroke-width="0.6" />
<path d="M88.0 719.9 L88.0 753.0" fill="none" stroke="#2e2e2e" stroke-width="0.6" />
<path d="M267.3 722.4 A16.3 16.3 0 0 1 299.9 722.4" fill="none" stroke="#1a1a1a" stroke-width="2.6" stroke-dasharray="2.2 0.8"/>
<path d="M266.0 722.4 A17.6 17.6 0 0 1 301.2 722.4" fill="none" stroke="#141414" stroke-width="0.7" />
<path d="M268.7 722.4 A14.9 14.9 0 0 1 298.5 722.4" fill="none" stroke="#141414" stroke-width="0.7" />
<path d="M273.7 720.9 A8.8 8.8 0 0 1 291.3 720.9" fill="none" stroke="#2a2a2a" stroke-width="0.7" />
<path d="M273.7 720.9 L273.7 753.0" fill="none" stroke="#2e2e2e" stroke-width="0.6" />
<path d="M127.7 715.3 V712 A14.9 14.9 0 0 1 157.5 712 V715.3" fill="none" stroke="#1c1c1c" stroke-width="2.8" stroke-dasharray="1.6 0.7"/>
<path d="M126.4 715.3 V712 A16.2 16.2 0 0 1 158.8 712" fill="none" stroke="#111" stroke-width="0.7"/>
<path d="M130.2 714.6 A12.4 12.4 0 0 1 155.0 714.6" fill="none" stroke="#111" stroke-width="0.9" stroke-dasharray="2.4 1 0.8 1"/>
<path d="M158.2 715.3 V712 A14.9 14.9 0 0 1 188.0 712 V715.3" fill="none" stroke="#1c1c1c" stroke-width="2.8" stroke-dasharray="1.6 0.7"/>
<path d="M156.9 715.3 V712 A16.2 16.2 0 0 1 189.3 712" fill="none" stroke="#111" stroke-width="0.7"/>
<path d="M160.7 714.6 A12.4 12.4 0 0 1 185.5 714.6" fill="none" stroke="#111" stroke-width="0.9" stroke-dasharray="2.4 1 0.8 1"/>
<path d="M187.4 715.3 V712 A14.9 14.9 0 0 1 217.2 712 V715.3" fill="none" stroke="#1c1c1c" stroke-width="2.8" stroke-dasharray="1.6 0.7"/>
<path d="M186.1 715.3 V712 A16.2 16.2 0 0 1 218.5 712" fill="none" stroke="#111" stroke-width="0.7"/>
<path d="M189.9 714.6 A12.4 12.4 0 0 1 214.7 714.6" fill="none" stroke="#111" stroke-width="0.9" stroke-dasharray="2.4 1 0.8 1"/>
<path d="M217.5 715.3 V712 A14.9 14.9 0 0 1 247.3 712 V715.3" fill="none" stroke="#1c1c1c" stroke-width="2.8" stroke-dasharray="1.6 0.7"/>
<path d="M216.2 715.3 V712 A16.2 16.2 0 0 1 248.6 712" fill="none" stroke="#111" stroke-width="0.7"/>
<path d="M220.0 714.6 A12.4 12.4 0 0 1 244.8 714.6" fill="none" stroke="#111" stroke-width="0.9" stroke-dasharray="2.4 1 0.8 1"/>
<rect x="130.8" y="716.5" width="2.8" height="36.5" fill="#555" />
<path d="M130.8 716.5 L130.8 753.0" fill="none" stroke="#151515" stroke-width="0.7" />
<path d="M133.6 716.5 L133.6 753.0" fill="none" stroke="#151515" stroke-width="0.7" />
<path d="M129.6 714.6 L134.8 714.6 L133.8 717.2 L130.6 717.2 Z" fill="#3a3a3a" stroke="#111" stroke-width="0.6"/>
<rect x="158.3" y="716.5" width="2.8" height="36.5" fill="#555" />
<path d="M158.3 716.5 L158.3 753.0" fill="none" stroke="#151515" stroke-width="0.7" />
<path d="M161.1 716.5 L161.1 753.0" fill="none" stroke="#151515" stroke-width="0.7" />
<path d="M157.1 714.6 L162.3 714.6 L161.3 717.2 L158.1 717.2 Z" fill="#3a3a3a" stroke="#111" stroke-width="0.6"/>
<rect x="186.4" y="716.5" width="2.8" height="36.5" fill="#555" />
<path d="M186.4 716.5 L186.4 753.0" fill="none" stroke="#151515" stroke-width="0.7" />
<path d="M189.2 716.5 L189.2 753.0" fill="none" stroke="#151515" stroke-width="0.7" />
<path d="M185.2 714.6 L190.4 714.6 L189.4 717.2 L186.2 717.2 Z" fill="#3a3a3a" stroke="#111" stroke-width="0.6"/>
<rect x="215.1" y="716.5" width="2.8" height="36.5" fill="#555" />
<path d="M215.1 716.5 L215.1 753.0" fill="none" stroke="#151515" stroke-width="0.7" />
<path d="M217.9 716.5 L217.9 753.0" fill="none" stroke="#151515" stroke-width="0.7" />
<path d="M213.9 714.6 L219.1 714.6 L218.1 717.2 L214.9 717.2 Z" fill="#3a3a3a" stroke="#111" stroke-width="0.6"/>
<rect x="242.0" y="716.5" width="2.8" height="36.5" fill="#555" />
<path d="M242.0 716.5 L242.0 753.0" fill="none" stroke="#151515" stroke-width="0.7" />
<path d="M244.8 716.5 L244.8 753.0" fill="none" stroke="#151515" stroke-width="0.7" />
<path d="M240.8 714.6 L246.0 714.6 L245.0 717.2 L241.8 717.2 Z" fill="#3a3a3a" stroke="#111" stroke-width="0.6"/>
<path d="M180.6 680.2 L186.5 680.2" fill="none" stroke="#2a2a2a" stroke-width="0.6" />
<path d="M44.2 752.9 L315.7 752.9 L309.0 760.6 L51.0 760.6 Z" fill="#303030" stroke="none" stroke-width="0.8"/>
<rect x="44.2" y="752.9" width="271.5" height="2.7" fill="#0a0a0a" />
<path d="M52.0 757.6 L309.0 757.6" fill="none" stroke="#111" stroke-width="1.0" stroke-dasharray="1.2 1"/>
<text x="89.2" y="768.9" font-family="Liberation Sans,sans-serif" font-size="9.4" font-weight="bold" fill="#2b2b2b" stroke="#202020" stroke-width="0.3" textLength="182.2" lengthAdjust="spacing" xml:space="preserve">CLIFTON  ROCKS  RAILWAY</text>
<path d="M75.6 770.0 L287.0 770.0" fill="none" stroke="#222" stroke-width="1.0" />
<rect x="71.0" y="774.9" width="36.1" height="73.1" fill="#4a4a4a" />
<rect x="71.0" y="774.9" width="34.5" height="5.4" fill="#555" />
<path d="M71.0 780.3 L105.5 780.3" fill="none" stroke="#151515" stroke-width="0.9" />
<path d="M71.0 774.9 L107.1 774.9" fill="none" stroke="#151515" stroke-width="0.8" />
<rect x="100.6" y="780.3" width="6.5" height="67.7" fill="#2a2a2a" />
<path d="M104.0 780.0 L104.0 848.0" fill="none" stroke="#111" stroke-width="0.8" />
<rect x="71.0" y="780.5" width="29.6" height="67.5" fill="#565656" />
<rect x="71.0" y="792.0" width="23.0" height="56.0" fill="#3a3a3a" />
<rect x="73.4" y="794.0" width="17.0" height="51.0" fill="#fbfbfb" />
<path d="M75.2 794.0 L75.2 843.5" fill="none" stroke="#1a1a1a" stroke-width="1.3" />
<path d="M78.7 794.0 L78.7 843.5" fill="none" stroke="#1a1a1a" stroke-width="1.3" />
<path d="M82.2 794.0 L82.2 843.5" fill="none" stroke="#1a1a1a" stroke-width="1.3" />
<path d="M85.6 794.0 L85.6 843.5" fill="none" stroke="#1a1a1a" stroke-width="1.3" />
<path d="M89.0 794.0 L89.0 843.5" fill="none" stroke="#1a1a1a" stroke-width="1.3" />
<path d="M73.4 806.0 L90.4 806.0" fill="none" stroke="#3a3a3a" stroke-width="0.9" />
<path d="M73.4 818.8 L90.4 818.8" fill="none" stroke="#3a3a3a" stroke-width="0.9" />
<path d="M73.4 831.5 L90.4 831.5" fill="none" stroke="#3a3a3a" stroke-width="0.9" />
<rect x="142.4" y="777.5" width="8.3" height="70.5" fill="url(#colg)" />
<path d="M139.6 774.9 L153.5 774.9 L151.3 777.9 L141.8 777.9 Z" fill="#3a3a3a" stroke="#111" stroke-width="0.7"/>
<rect x="211.0" y="777.5" width="8.3" height="70.5" fill="url(#colg)" />
<path d="M208.2 774.9 L222.1 774.9 L219.9 777.9 L210.4 777.9 Z" fill="#3a3a3a" stroke="#111" stroke-width="0.7"/>
<rect x="252.7" y="776.0" width="18.5" height="72.0" fill="#4d4d4d" />
<path d="M252.7 776.0 L252.7 848.0" fill="none" stroke="#151515" stroke-width="0.9" />
<path d="M252.7 785.6 L271.2 785.6" fill="none" stroke="#1d1d1d" stroke-width="1.3" />
<path d="M252.7 793.0 L271.2 793.0" fill="none" stroke="#1d1d1d" stroke-width="0.9" />
<path d="M252.7 801.4 L271.2 801.4" fill="none" stroke="#1d1d1d" stroke-width="1.3" />
<path d="M252.7 808.8 L271.2 808.8" fill="none" stroke="#1d1d1d" stroke-width="0.9" />
<path d="M252.7 817.1 L271.2 817.1" fill="none" stroke="#1d1d1d" stroke-width="1.3" />
<path d="M252.7 824.6 L271.2 824.6" fill="none" stroke="#1d1d1d" stroke-width="0.9" />
<path d="M252.7 832.9 L271.2 832.9" fill="none" stroke="#1d1d1d" stroke-width="1.3" />
<path d="M252.7 840.3 L271.2 840.3" fill="none" stroke="#1d1d1d" stroke-width="0.9" />
<rect x="294.4" y="776.0" width="13.9" height="72.0" fill="#4d4d4d" />
<path d="M294.4 776.0 L294.4 848.0" fill="none" stroke="#151515" stroke-width="0.9" />
<path d="M294.4 785.6 L308.3 785.6" fill="none" stroke="#1d1d1d" stroke-width="1.3" />
<path d="M294.4 793.0 L308.3 793.0" fill="none" stroke="#1d1d1d" stroke-width="0.9" />
<path d="M294.4 801.4 L308.3 801.4" fill="none" stroke="#1d1d1d" stroke-width="1.3" />
<path d="M294.4 808.8 L308.3 808.8" fill="none" stroke="#1d1d1d" stroke-width="0.9" />
<path d="M294.4 817.1 L308.3 817.1" fill="none" stroke="#1d1d1d" stroke-width="1.3" />
<path d="M294.4 824.6 L308.3 824.6" fill="none" stroke="#1d1d1d" stroke-width="0.9" />
<path d="M294.4 832.9 L308.3 832.9" fill="none" stroke="#1d1d1d" stroke-width="1.3" />
<path d="M294.4 840.3 L308.3 840.3" fill="none" stroke="#1d1d1d" stroke-width="0.9" />
<path d="M251.2 774.9 L272.4 774.9 L271.2 777.2 L252.7 777.2 Z" fill="#2a2a2a" stroke="none" stroke-width="0.8"/>
<path d="M293.4 774.9 L309.8 774.9 L308.3 777.2 L294.4 777.2 Z" fill="#2a2a2a" stroke="none" stroke-width="0.8"/>
<path d="M271.2 848 V788 A7.9 9.5 0 0 1 287 788 V848 Z" fill="#434343" stroke="#222" stroke-width="0.8"/>
<path d="M271.2 821.9 L287.0 821.9" fill="none" stroke="#151515" stroke-width="1.6" />
<path d="M279.0 778.0 L279.0 782.0" fill="none" stroke="#bbb" stroke-width="0.8" />
<path d="M281.2 778.0 L281.2 782.0" fill="none" stroke="#bbb" stroke-width="0.8" />
<rect x="53.0" y="616.4" width="249.7" height="9.7" fill="#4b4b4b" />
<path d="M53.0 616.4 L315.4 616.4" fill="none" stroke="#151515" stroke-width="0.9" />
<path d="M53.0 626.1 L302.7 626.1" fill="none" stroke="#151515" stroke-width="0.8" />
<path d="M53.0 616.4 L53.0 626.1" fill="none" stroke="#151515" stroke-width="0.8" />
<rect x="302.7" y="616.4" width="12.5" height="10.2" fill="#5c5c5c" />
<path d="M315.4 616.4 L594.2 769.7 L594.2 782.8 L314.6 627.2 Z" fill="#4b4b4b" stroke="#161616" stroke-width="0.9"/>
<rect x="590.3" y="848.0" width="3.9" height="4.5" fill="#474747" />
<path d="M594.2 769.7 L594.2 852.5" fill="none" stroke="#111" stroke-width="1.3" />
<rect x="62.6" y="626.1" width="7.5" height="221.9" fill="#4e4e4e" />
<path d="M62.6 626.1 L62.6 848.0" fill="none" stroke="#151515" stroke-width="0.9" />
<path d="M70.1 626.1 L70.1 848.0" fill="none" stroke="#151515" stroke-width="0.9" />
<rect x="118.3" y="626.1" width="7.4" height="221.9" fill="#4e4e4e" />
<path d="M118.3 626.1 L118.3 848.0" fill="none" stroke="#151515" stroke-width="0.9" />
<path d="M125.7 626.1 L125.7 848.0" fill="none" stroke="#151515" stroke-width="0.9" />
<rect x="174.2" y="626.1" width="8.0" height="221.9" fill="#4e4e4e" />
<path d="M174.2 626.1 L174.2 848.0" fill="none" stroke="#151515" stroke-width="0.9" />
<path d="M182.2 626.1 L182.2 848.0" fill="none" stroke="#151515" stroke-width="0.9" />
<rect x="230.4" y="626.1" width="7.4" height="221.9" fill="#4e4e4e" />
<path d="M230.4 626.1 L230.4 848.0" fill="none" stroke="#151515" stroke-width="0.9" />
<path d="M237.8 626.1 L237.8 848.0" fill="none" stroke="#151515" stroke-width="0.9" />
<rect x="287.0" y="626.1" width="8.3" height="221.9" fill="#4e4e4e" />
<path d="M287.0 626.1 L287.0 848.0" fill="none" stroke="#151515" stroke-width="0.9" />
<path d="M295.3 626.1 L295.3 848.0" fill="none" stroke="#151515" stroke-width="0.9" /></svg></div>
</body></html>
